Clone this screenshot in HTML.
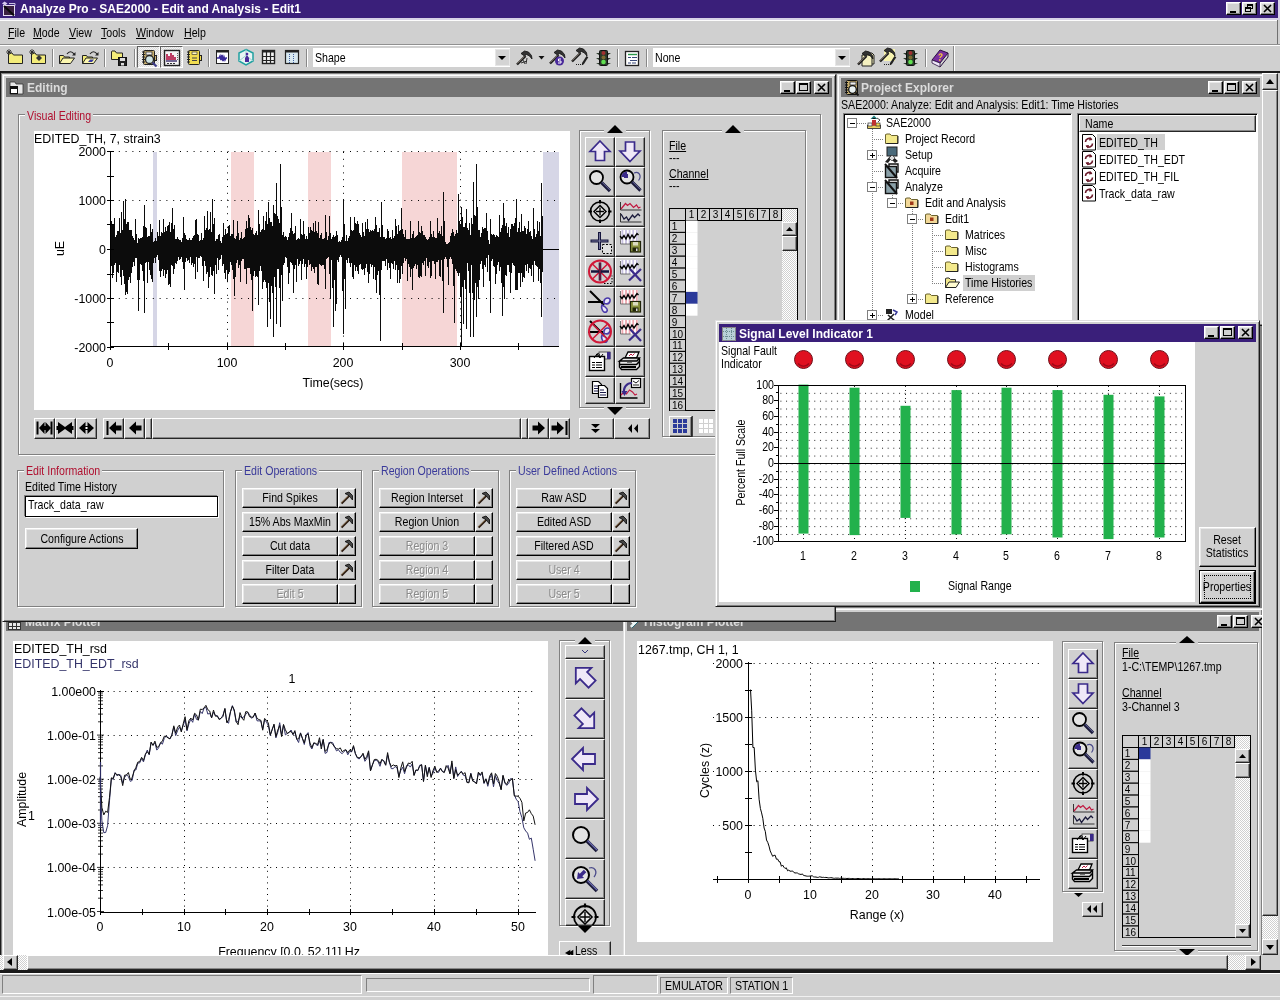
<!DOCTYPE html>
<html><head><meta charset="utf-8"><title>Analyze Pro - SAE2000 - Edit and Analysis - Edit1</title>
<style>
html,body{margin:0;padding:0}
html{width:1280px;height:1000px;overflow:hidden}
body{width:1280px;height:1000px;overflow:hidden;background:#d0d0d0;position:relative;will-change:transform;font-family:"Liberation Sans",sans-serif;font-size:11px}
body div,body svg{position:absolute;box-sizing:border-box;white-space:nowrap}
body svg{overflow:hidden}
.r{border:1px solid;border-color:#fff #262626 #262626 #fff;box-shadow:inset -1px -1px 0 #888}
.r2{border:1px solid;border-color:#fff #000 #000 #fff;box-shadow:inset -1px -1px 0 #808080,inset 1px 1px 0 #e8e8e8}
.s{border:1px solid;border-color:#808080 #fff #fff #808080}
.s2{border:1px solid;border-color:#808080 #fff #fff #808080;box-shadow:inset 1px 1px 0 #000}
.g{border:1px solid #808080;box-shadow:1px 1px 0 #fff,inset 1px 1px 0 #fff}
.u{text-decoration:underline}
.h2{background-color:#f4f4f4;background-image:linear-gradient(45deg,#dcdcdc 25%,transparent 25%,transparent 75%,#dcdcdc 75%),linear-gradient(45deg,#dcdcdc 25%,transparent 25%,transparent 75%,#dcdcdc 75%);background-size:2px 2px;background-position:0 0,1px 1px}
.h{background-color:#fff;background-image:linear-gradient(45deg,#d0d0d0 25%,transparent 25%,transparent 75%,#d0d0d0 75%),linear-gradient(45deg,#d0d0d0 25%,transparent 25%,transparent 75%,#d0d0d0 75%);background-size:2px 2px;background-position:0 0,1px 1px}
</style></head><body>
<div style="left:0px;top:0px;width:1280px;height:18px;background:#3a1f7a;"></div>
<svg style="left:1px;top:0px;" width="18" height="18" viewBox="1 0 18 18"><rect x="3.500" y="5.500" width="11" height="10" fill="#3a2040" stroke="#e4dcf0"/><path d="M4 6l10 9.500" stroke="#0a0a0a" stroke-width="2"/><path d="M2 3.500l2.500-2 3 2-2.500 2z" fill="#d8ccf0"/><path d="M9 3.500h6v2" stroke="#c8c0e0" fill="none"/></svg>
<div style="left:20px;top:2px;font-size:12px;line-height:14px;color:#fff;font-weight:bold;">Analyze Pro - SAE2000 - Edit and Analysis - Edit1</div>
<div class="r2" style="left:1226px;top:2px;width:15px;height:13px;background:#d0d0d0"></div>
<div style="left:1230px;top:11px;width:6px;height:2px;background:#000;"></div>
<div class="r2" style="left:1242px;top:2px;width:15px;height:13px;background:#d0d0d0"></div>
<div style="left:1247px;top:4px;width:6px;height:5px;border:1px solid #000;border-top-width:2px"></div>
<div style="left:1245px;top:7px;width:6px;height:5px;border:1px solid #000;border-top-width:2px;background:#d0d0d0"></div>
<div class="r2" style="left:1260px;top:2px;width:15px;height:13px;background:#d0d0d0"></div>
<svg style="left:1263px;top:4px;" width="9" height="9" viewBox="1263 4 9 9"><path d="M1264 5l7 7M1271 5l-7 7" stroke="#000" stroke-width="1.6" fill="none"/></svg>
<div style="left:1278px;top:0px;width:2px;height:18px;background:#d8d4e8;"></div>
<div style="left:0px;top:18px;width:1280px;height:27px;background:#d0d0d0;"></div>
<div style="left:0px;top:18px;width:1280px;height:2px;background:#d6d2e6;"></div>
<div style="left:0px;top:20px;width:1278px;height:1px;background:#fcfcfc;"></div>
<div style="left:1277px;top:20px;width:1px;height:25px;background:#707070;"></div>
<div style="left:8px;top:26px;font-size:12.2px;line-height:14px;transform:scaleX(0.87);transform-origin:0 50%;color:#000;"><span class="u">F</span>ile</div>
<div style="left:33px;top:26px;font-size:12.2px;line-height:14px;transform:scaleX(0.87);transform-origin:0 50%;color:#000;"><span class="u">M</span>ode</div>
<div style="left:69px;top:26px;font-size:12.2px;line-height:14px;transform:scaleX(0.87);transform-origin:0 50%;color:#000;"><span class="u">V</span>iew</div>
<div style="left:101px;top:26px;font-size:12.2px;line-height:14px;transform:scaleX(0.87);transform-origin:0 50%;color:#000;"><span class="u">T</span>ools</div>
<div style="left:136px;top:26px;font-size:12.2px;line-height:14px;transform:scaleX(0.87);transform-origin:0 50%;color:#000;"><span class="u">W</span>indow</div>
<div style="left:184px;top:26px;font-size:12.2px;line-height:14px;transform:scaleX(0.87);transform-origin:0 50%;color:#000;"><span class="u">H</span>elp</div>
<div style="left:0px;top:44px;width:1280px;height:1px;background:#909090;"></div>
<div style="left:0px;top:45px;width:1280px;height:1px;background:#fff;"></div>
<div style="left:0px;top:46px;width:1280px;height:25px;background:#d0d0d0;"></div>
<div style="left:52px;top:49px;width:1px;height:18px;background:#888;"></div>
<div style="left:53px;top:49px;width:1px;height:18px;background:#fff;"></div>
<div style="left:104px;top:49px;width:1px;height:18px;background:#888;"></div>
<div style="left:105px;top:49px;width:1px;height:18px;background:#fff;"></div>
<div style="left:134px;top:49px;width:1px;height:18px;background:#888;"></div>
<div style="left:135px;top:49px;width:1px;height:18px;background:#fff;"></div>
<div style="left:208px;top:49px;width:1px;height:18px;background:#888;"></div>
<div style="left:209px;top:49px;width:1px;height:18px;background:#fff;"></div>
<div style="left:306px;top:49px;width:1px;height:18px;background:#888;"></div>
<div style="left:307px;top:49px;width:1px;height:18px;background:#fff;"></div>
<div style="left:617px;top:49px;width:1px;height:18px;background:#888;"></div>
<div style="left:618px;top:49px;width:1px;height:18px;background:#fff;"></div>
<div style="left:646px;top:49px;width:1px;height:18px;background:#888;"></div>
<div style="left:647px;top:49px;width:1px;height:18px;background:#fff;"></div>
<div style="left:925px;top:49px;width:1px;height:18px;background:#888;"></div>
<div style="left:926px;top:49px;width:1px;height:18px;background:#fff;"></div>
<div style="left:313px;top:48px;width:197px;height:19px;background:#fff;"></div>
<div style="left:315px;top:51px;font-size:12.2px;line-height:14px;transform:scaleX(0.87);transform-origin:0 50%;color:#000;">Shape</div>
<div style="left:495px;top:49px;width:15px;height:17px;background:#d4d4d4;border:1px solid #e6e6e6"></div>
<svg style="left:495px;top:50px;" width="14" height="16" viewBox="495 50 14 16"><path d="M498 56h8l-4 4z" fill="#000"/></svg>
<div style="left:653px;top:48px;width:197px;height:19px;background:#fff;"></div>
<div style="left:655px;top:51px;font-size:12.2px;line-height:14px;transform:scaleX(0.87);transform-origin:0 50%;color:#000;">None</div>
<div style="left:835px;top:49px;width:15px;height:17px;background:#d4d4d4;border:1px solid #e6e6e6"></div>
<svg style="left:835px;top:50px;" width="14" height="16" viewBox="835 50 14 16"><path d="M838 56h8l-4 4z" fill="#000"/></svg>
<div style="left:0px;top:71px;width:1280px;height:2px;background:#1a1a1a;"></div>
<div style="left:0px;top:73px;width:1262px;height:897px;background:#808080;"></div>
<div style="left:0px;top:73px;width:1px;height:897px;background:#1a1a1a;"></div>
<div class="h2" style="left:137px;top:46px;width:23px;height:22px;border:1px solid;border-color:#606060 #fff #fff #606060"></div>
<div class="h2" style="left:160px;top:46px;width:23px;height:22px;border:1px solid;border-color:#606060 #fff #fff #606060"></div>
<svg style="left:0px;top:46px;" width="960" height="24" viewBox="0 46 960 24"><path d="M8.5 53.5v10h14v-8.5h-9l-1.500-2h-3z" fill="#f3ec7a" stroke="#222" stroke-width="1"/><path d="M9 49v6M6 52h6M7 50l4 4M11 50l-4 4" stroke="#222" stroke-width="0.8"/><path d="M31.5 53.5v10h14v-8.5h-9l-1.500-2h-3z" fill="#f3ec7a" stroke="#222" stroke-width="1"/><path d="M32 49v6M29 52h6M30 50l4 4M34 50l-4 4" stroke="#222" stroke-width="0.8"/><path d="M39 55l3 3-3 3-3-3z" fill="#333"/><path d="M59.5 63.5v-8h4l1 1.500h5v2" fill="#f3ec7a" stroke="#222"/><path d="M59.5 63.5l3.500-5.500h11.500l-4 5.500z" fill="#fbf7b0" stroke="#222"/><path d="M67 54c2-3 5-3 7 0" fill="none" stroke="#222" stroke-width="1.2"/><path d="M75.5 52v3.500h-3.500z" fill="#222"/><path d="M82.5 63.5v-8h4l1 1.500h5v2" fill="#f3ec7a" stroke="#222"/><path d="M82.5 63.5l3.500-5.500h11.500l-4 5.500z" fill="#fbf7b0" stroke="#222"/><path d="M90 54c2-3 5-3 7 0" fill="none" stroke="#222" stroke-width="1.2"/><path d="M98.5 52v3.500h-3.500z" fill="#222"/><path d="M88 62l2-2.500h4l-2 2.500z" fill="#3a3aa0"/><path d="M111.5 51.5v8h11v-6.5h-6l-1.500-2h-3z" fill="#f3ec7a" stroke="#222" stroke-width="1"/><rect x="118.500" y="57.500" width="8" height="8" fill="#222" stroke="#111"/><rect x="120" y="58" width="5" height="3" fill="#ddd"/><rect x="121" y="63" width="3" height="2.500" fill="#ddd"/><rect x="143.5" y="50.5" width="11" height="14" rx="1" fill="#c8b070" stroke="#222"/><path d="M142 52h3M142 54.5h3M142 57h3M142 59.5h3M142 62h3" stroke="#222" stroke-width="1"/><rect x="154.5" y="55.5" width="2" height="5" fill="#c8b070" stroke="#222"/><rect x="146" y="52" width="6" height="3" fill="#eee" stroke="#222" stroke-width="0.7"/><circle cx="149.500" cy="59.500" r="4" fill="#cfe4e4" stroke="#222" stroke-width="1.3"/><path d="M152.500 62.500l4 4" stroke="#3a3a8a" stroke-width="2"/><rect x="164.500" y="50.500" width="15" height="15" fill="#f4f4f4" stroke="#222" stroke-width="1.4"/><path d="M167 60v-6M169 60v-4M171 60v-7M173 60v-5M175 60v-3" stroke="#b01040" stroke-width="1.6"/><path d="M166 61h11" stroke="#3a2a6a" stroke-width="1.4"/><path d="M167 63.500h9" stroke="#333" stroke-dasharray="2 1"/><path d="M177.500 53v7" stroke="#666" stroke-dasharray="1 1"/><rect x="188.5" y="50.5" width="11" height="14" rx="1" fill="#f0dc50" stroke="#222"/><path d="M187 52h3M187 54.5h3M187 57h3M187 59.5h3M187 62h3" stroke="#222" stroke-width="1"/><rect x="199.5" y="55.5" width="2" height="5" fill="#f0dc50" stroke="#222"/><rect x="192" y="52" width="5" height="2.500" fill="#fff8c0" stroke="#222" stroke-width="0.6"/><path d="M192 58h5M192 60.500h5" stroke="#444"/><rect x="216.500" y="50.500" width="12" height="13" fill="#fff" stroke="#222"/><rect x="216" y="50" width="13" height="2.500" fill="#222"/><path d="M217 58h2l1-2 1 4 1-5 1 6 1-4 1 3 1-2h1" stroke="#3a2a9a" stroke-width="1.6" fill="none"/><path d="M246 49.500l7 3.500v8l-7 4-7-4v-8z" fill="#e8f4f4" stroke="#20a0a0" stroke-width="1.5"/><path d="M246 49.500v6l-7 5.500M246 55.500l7 5.500" stroke="#9ad0d0" fill="none"/><path d="M245 62v-4l2-3 2 3v4z" fill="#4a2a9a"/><circle cx="247" cy="54" r="1.300" fill="#4a2a9a"/><rect x="262.500" y="50.500" width="12" height="13" fill="#f4f4f4" stroke="#222" stroke-width="1.4"/><rect x="262" y="50" width="13" height="2.500" fill="#222"/><path d="M266.500 52v12M270.500 52v12M262 56.500h13M262 60.500h13" stroke="#222" stroke-width="1.2"/><rect x="285.500" y="50.500" width="13" height="13" fill="#d8e8f0" stroke="#222" stroke-width="1.2"/><rect x="285" y="50" width="14" height="2.500" fill="#222"/><path d="M289.500 54v9M293.500 54v9" stroke="#4060a0" stroke-dasharray="1 1"/><path d="M287 63.500h11" stroke="#222"/><path d="M517 64.5l8.500-8.500" stroke="#1a1a1a" stroke-width="2.4"/><path d="M517.2 63.6l7.500-7.500" stroke="#b0a090" stroke-width="0.7"/><path d="M521 53.5l3.500-2.500 4 1 3 3.500 0.500 3.500-2.500-3-3-1.500-2 1.500z" fill="#333" stroke="#111" stroke-width="0.8"/><path d="M523 60l2 4M527 58l-1 6M521 63l6-2" stroke="#222" stroke-width="0.9"/><path d="M538.500 56h6l-3 3.500z" fill="#111"/><path d="M550 63.5l8.500-8.500" stroke="#1a1a1a" stroke-width="2.4"/><path d="M550.2 62.6l7.500-7.500" stroke="#b0a090" stroke-width="0.7"/><path d="M554 52.5l3.500-2.500 4 1 3 3.500 0.500 3.500-2.500-3-3-1.500-2 1.500z" fill="#333" stroke="#111" stroke-width="0.8"/><circle cx="559.500" cy="61" r="4.500" fill="#4a2a9a"/><path d="M561 59h-2.500v2h2.500v2h-3" stroke="#fff" fill="none" stroke-width="1"/><path d="M572 61.5l8.500-8.500" stroke="#1a1a1a" stroke-width="2.4"/><path d="M572.2 60.6l7.500-7.500" stroke="#b0a090" stroke-width="0.7"/><path d="M576 50.5l3.500-2.500 4 1 3 3.500 0.500 3.500-2.500-3-3-1.500-2 1.500z" fill="#333" stroke="#111" stroke-width="0.8"/><path d="M576 64.500h7" stroke="#222" stroke-dasharray="1 1"/><path d="M582 63l4.500-7 1.800 1.200-4.500 7-2 1z" fill="#222"/><rect x="599.5" y="50.5" width="8" height="15" rx="1" fill="#2a3a2a" stroke="#111"/><path d="M596 53h3v2zM611 53h-3v2zM596 58h3v2zM611 58h-3v2zM596 63h3v1.500zM611 63h-3v1.500z" fill="#2a3a2a"/><circle cx="603.5" cy="53" r="2" fill="#a03030"/><circle cx="603.5" cy="57.5" r="2" fill="#7a6a30"/><circle cx="603.5" cy="62" r="2.300" fill="#60e050"/><rect x="625.500" y="51.500" width="13" height="14" fill="#fff" stroke="#222" stroke-width="1.3"/><path d="M628 54.500h9" stroke="#2a9a4a" stroke-width="1.4"/><path d="M628 57.500h3M632 57.500h5M630 60.500h7M628 63h3M632 63h4" stroke="#3a4a7a" stroke-width="1.1"/><path d="M864 53h8l2 2v9h-10z" fill="#f4f0c0" stroke="#222"/><path d="M862 55h8l2 2v9h-10z" fill="#f4f0c0" stroke="#222"/><path d="M858 64.5l8.500-8.500" stroke="#1a1a1a" stroke-width="2.4"/><path d="M858.2 63.6l7.500-7.500" stroke="#b0a090" stroke-width="0.7"/><path d="M862 53.5l3.500-2.500 4 1 3 3.500 0.500 3.500-2.500-3-3-1.500-2 1.500z" fill="#333" stroke="#111" stroke-width="0.8"/><rect x="884" y="49" width="11" height="12" fill="#f8f4b0"/><path d="M880 61.5l8.500-8.500" stroke="#1a1a1a" stroke-width="2.4"/><path d="M880.2 60.6l7.500-7.500" stroke="#b0a090" stroke-width="0.7"/><path d="M884 50.5l3.500-2.500 4 1 3 3.500 0.500 3.500-2.500-3-3-1.500-2 1.500z" fill="#333" stroke="#111" stroke-width="0.8"/><path d="M884 64.500h7" stroke="#222" stroke-dasharray="1 1"/><path d="M890 63l4.500-7 1.800 1.200-4.500 7-2 1z" fill="#222"/><rect x="906.5" y="50.5" width="8" height="15" rx="1" fill="#2a3a2a" stroke="#111"/><path d="M903 53h3v2zM918 53h-3v2zM903 58h3v2zM918 58h-3v2zM903 63h3v1.500zM918 63h-3v1.500z" fill="#2a3a2a"/><circle cx="910.5" cy="53" r="2" fill="#a03030"/><circle cx="910.5" cy="57.5" r="2" fill="#7a6a30"/><circle cx="910.5" cy="62" r="2.300" fill="#60e050"/><path d="M932 60l8-10 8 3-8 10z" fill="#7a30a0" stroke="#2a1040" stroke-width="1"/><path d="M932 60v3l8 4v-4z" fill="#f0e8f8" stroke="#2a1040" stroke-width="0.8"/><path d="M940 67l8-10v-4" fill="none" stroke="#2a1040"/><path d="M939 55.500c0-2 3-2 3-0.500s-2 1.500-2 3" stroke="#f0c040" fill="none" stroke-width="1.3"/><circle cx="939.800" cy="60" r="0.900" fill="#f0c040"/></svg>
<div style="left:953px;top:46px;width:1px;height:25px;background:#888;"></div>
<div style="left:954px;top:46px;width:1px;height:25px;background:#fff;"></div>
<div style="left:2px;top:608px;width:640px;height:360px;background:#d0d0d0;border:1px solid;border-color:#e0e0e0 #1a1a1a #1a1a1a #e0e0e0;box-shadow:inset 1px 1px 0 #fff,inset -1px -1px 0 #808080"></div>
<div style="left:6px;top:612px;width:632px;height:19px;background:#747474;"></div>
<div style="left:25px;top:615px;font-size:12px;line-height:14px;color:#dcdcdc;font-weight:bold;">Matrix Plotter</div>
<svg style="left:7px;top:613px;" width="16" height="17" viewBox="7 613 16 17"><rect x="8.500" y="622.500" width="12" height="7" fill="#e8e8e8" stroke="#333"/><path d="M12.500 623v7M16.500 623v7M9 626.500h11" stroke="#333"/></svg>
<div style="left:13px;top:641px;width:535px;height:320px;background:#fff;"></div>
<div style="left:14px;top:642px;font-size:12.4px;line-height:14.4px;color:#000;">EDITED_TH_rsd</div>
<div style="left:14px;top:657px;font-size:12.4px;line-height:14.4px;color:#34346a;">EDITED_TH_EDT_rsd</div>
<div style="left:283px;width:18px;text-align:center;top:672px;font-size:12.4px;line-height:14.4px;color:#000;">1</div>
<svg style="left:13px;top:641px;" width="535" height="314" viewBox="13 641 535 314"><path d="M102 691.5H536" stroke="#000" stroke-width="1" stroke-dasharray="1 4.8"/><path d="M102 735.5H536" stroke="#000" stroke-width="1" stroke-dasharray="1 4.8"/><path d="M102 779.5H536" stroke="#000" stroke-width="1" stroke-dasharray="1 4.8"/><path d="M102 823.5H536" stroke="#000" stroke-width="1" stroke-dasharray="1 4.8"/><path d="M102 867.5H536" stroke="#000" stroke-width="1" stroke-dasharray="1 4.8"/><path d="M184.5 691V911.5" stroke="#000" stroke-width="1" stroke-dasharray="1 4.8"/><path d="M267.5 691V911.5" stroke="#000" stroke-width="1" stroke-dasharray="1 4.8"/><path d="M350.5 691V911.5" stroke="#000" stroke-width="1" stroke-dasharray="1 4.8"/><path d="M434.5 691V911.5" stroke="#000" stroke-width="1" stroke-dasharray="1 4.8"/><path d="M518.5 691V911.5" stroke="#000" stroke-width="1" stroke-dasharray="1 4.8"/><path d="M100.5 690V912.5H536" stroke="#000" fill="none"/><path d="M100.5 909V915" stroke="#000"/><path d="M142.5 909V915" stroke="#000"/><path d="M184.5 909V915" stroke="#000"/><path d="M225.5 909V915" stroke="#000"/><path d="M267.5 909V915" stroke="#000"/><path d="M309.5 909V915" stroke="#000"/><path d="M350.5 909V915" stroke="#000"/><path d="M392.5 909V915" stroke="#000"/><path d="M434.5 909V915" stroke="#000"/><path d="M476.5 909V915" stroke="#000"/><path d="M518.5 909V915" stroke="#000"/><path d="M97 735.1H104" stroke="#000" stroke-width="0.8"/><path d="M98 721.8H103" stroke="#000" stroke-width="0.8"/><path d="M98 714.1H103" stroke="#000" stroke-width="0.8"/><path d="M98 708.5H103" stroke="#000" stroke-width="0.8"/><path d="M98 704.3H103" stroke="#000" stroke-width="0.8"/><path d="M98 700.8H103" stroke="#000" stroke-width="0.8"/><path d="M98 697.8H103" stroke="#000" stroke-width="0.8"/><path d="M98 695.3H103" stroke="#000" stroke-width="0.8"/><path d="M98 693.0H103" stroke="#000" stroke-width="0.8"/><path d="M97 779.2H104" stroke="#000" stroke-width="0.8"/><path d="M98 765.9H103" stroke="#000" stroke-width="0.8"/><path d="M98 758.2H103" stroke="#000" stroke-width="0.8"/><path d="M98 752.6H103" stroke="#000" stroke-width="0.8"/><path d="M98 748.4H103" stroke="#000" stroke-width="0.8"/><path d="M98 744.9H103" stroke="#000" stroke-width="0.8"/><path d="M98 741.9H103" stroke="#000" stroke-width="0.8"/><path d="M98 739.4H103" stroke="#000" stroke-width="0.8"/><path d="M98 737.1H103" stroke="#000" stroke-width="0.8"/><path d="M97 823.3H104" stroke="#000" stroke-width="0.8"/><path d="M98 810.0H103" stroke="#000" stroke-width="0.8"/><path d="M98 802.3H103" stroke="#000" stroke-width="0.8"/><path d="M98 796.7H103" stroke="#000" stroke-width="0.8"/><path d="M98 792.5H103" stroke="#000" stroke-width="0.8"/><path d="M98 789.0H103" stroke="#000" stroke-width="0.8"/><path d="M98 786.0H103" stroke="#000" stroke-width="0.8"/><path d="M98 783.5H103" stroke="#000" stroke-width="0.8"/><path d="M98 781.2H103" stroke="#000" stroke-width="0.8"/><path d="M97 867.4H104" stroke="#000" stroke-width="0.8"/><path d="M98 854.1H103" stroke="#000" stroke-width="0.8"/><path d="M98 846.4H103" stroke="#000" stroke-width="0.8"/><path d="M98 840.8H103" stroke="#000" stroke-width="0.8"/><path d="M98 836.6H103" stroke="#000" stroke-width="0.8"/><path d="M98 833.1H103" stroke="#000" stroke-width="0.8"/><path d="M98 830.1H103" stroke="#000" stroke-width="0.8"/><path d="M98 827.6H103" stroke="#000" stroke-width="0.8"/><path d="M98 825.3H103" stroke="#000" stroke-width="0.8"/><path d="M97 911.5H104" stroke="#000" stroke-width="0.8"/><path d="M98 898.2H103" stroke="#000" stroke-width="0.8"/><path d="M98 890.5H103" stroke="#000" stroke-width="0.8"/><path d="M98 884.9H103" stroke="#000" stroke-width="0.8"/><path d="M98 880.7H103" stroke="#000" stroke-width="0.8"/><path d="M98 877.2H103" stroke="#000" stroke-width="0.8"/><path d="M98 874.2H103" stroke="#000" stroke-width="0.8"/><path d="M98 871.7H103" stroke="#000" stroke-width="0.8"/><path d="M98 869.4H103" stroke="#000" stroke-width="0.8"/><path d="M97 691.5H104" stroke="#000"/><path d="M100.0 778.2 L101.9 820.8 L103.8 832.7 L105.7 832.5 L107.6 825.7 L109.5 800.8 L111.4 778.0 L113.2 779.4 L115.1 772.5 L117.0 775.8 L118.9 774.3 L120.8 775.3 L122.7 783.2 L124.6 777.5 L126.5 774.8 L128.4 776.5 L130.3 781.4 L132.2 780.4 L134.1 770.0 L135.9 770.0 L137.8 763.1 L139.7 762.9 L141.6 758.5 L143.5 761.9 L145.4 754.8 L147.3 750.0 L149.2 754.8 L151.1 742.8 L153.0 745.1 L154.9 742.8 L156.8 750.1 L158.6 747.9 L160.5 742.4 L162.4 744.2 L164.3 738.3 L166.2 735.9 L168.1 737.5 L170.0 739.1 L171.9 734.5 L173.8 727.0 L175.7 735.6 L177.6 730.6 L179.5 727.0 L181.3 730.8 L183.2 725.6 L185.1 719.6 L187.0 730.9 L188.9 723.8 L190.8 719.2 L192.7 722.3 L194.6 713.8 L196.5 719.4 L198.4 719.9 L200.3 711.4 L202.2 713.6 L204.1 708.0 L205.9 707.2 L207.8 714.1 L209.7 713.3 L211.6 717.8 L213.5 712.0 L215.4 715.6 L217.3 715.6 L219.2 718.9 L221.1 718.3 L223.0 715.0 L224.9 708.8 L226.8 722.0 L228.6 723.2 L230.5 711.5 L232.4 705.6 L234.3 711.5 L236.2 722.2 L238.1 721.5 L240.0 716.3 L241.9 717.8 L243.8 716.9 L245.7 714.4 L247.6 712.1 L249.5 714.6 L251.3 718.2 L253.2 717.3 L255.1 713.2 L257.0 720.8 L258.9 720.9 L260.8 720.9 L262.7 729.2 L264.6 719.9 L266.5 722.1 L268.4 725.8 L270.3 735.5 L272.2 729.0 L274.0 725.1 L275.9 737.9 L277.8 732.2 L279.7 722.7 L281.6 735.1 L283.5 725.0 L285.4 734.9 L287.3 733.4 L289.2 732.4 L291.1 730.0 L293.0 734.7 L294.9 732.1 L296.7 739.0 L298.6 742.5 L300.5 732.8 L302.4 738.6 L304.3 744.5 L306.2 734.8 L308.1 732.6 L310.0 745.8 L311.9 749.0 L313.8 743.1 L315.7 743.9 L317.6 746.0 L319.5 740.7 L321.3 746.2 L323.2 739.4 L325.1 753.4 L327.0 752.4 L328.9 742.6 L330.8 742.3 L332.7 742.7 L334.6 746.9 L336.5 750.9 L338.4 749.7 L340.3 752.3 L342.2 753.7 L344.0 751.5 L345.9 750.0 L347.8 754.8 L349.7 751.4 L351.6 751.9 L353.5 746.8 L355.4 753.7 L357.3 757.9 L359.2 759.0 L361.1 756.4 L363.0 754.4 L364.9 761.3 L366.7 758.7 L368.6 752.5 L370.5 770.7 L372.4 765.1 L374.3 760.5 L376.2 760.1 L378.1 761.6 L380.0 766.3 L381.9 759.8 L383.8 760.7 L385.7 765.2 L387.6 754.8 L389.4 762.5 L391.3 768.6 L393.2 768.7 L395.1 766.5 L397.0 767.8 L398.9 776.2 L400.8 770.4 L402.7 767.2 L404.6 773.7 L406.5 765.6 L408.4 764.9 L410.3 767.1 L412.2 764.0 L414.0 775.0 L415.9 770.0 L417.8 770.7 L419.7 765.2 L421.6 764.8 L423.5 781.3 L425.4 765.7 L427.3 774.4 L429.2 767.3 L431.1 776.2 L433.0 773.1 L434.9 767.9 L436.7 772.0 L438.6 772.4 L440.5 768.0 L442.4 771.5 L444.3 772.1 L446.2 767.5 L448.1 765.3 L450.0 772.8 L451.9 763.3 L453.8 778.6 L455.7 766.9 L457.6 776.5 L459.4 773.4 L461.3 771.3 L463.2 775.1 L465.1 775.6 L467.0 782.4 L468.9 782.4 L470.8 773.2 L472.7 780.3 L474.6 782.1 L476.5 782.9 L478.4 772.8 L480.3 775.7 L482.1 773.3 L484.0 783.6 L485.9 778.8 L487.8 786.3 L489.7 778.3 L491.6 774.4 L493.5 786.8 L495.4 775.7 L497.3 780.7 L499.2 783.6 L501.1 789.1 L503.0 775.9 L504.8 783.0 L506.7 785.4 L508.6 783.5 L510.5 778.6 L512.4 779.1 L514.3 794.7 L516.2 799.2 L518.1 801.6 L520.0 811.7 L521.9 817.7 L523.8 827.8 L525.7 831.0 L527.6 833.1 L529.4 839.3 L531.3 838.1 L533.2 849.2 L535.1 860.8" stroke="#34346a" fill="none" stroke-width="1"/><path d="M100.0 776.8 L101.9 807.6 L103.8 814.9 L105.7 811.2 L107.6 812.4 L109.5 797.3 L111.4 777.9 L113.2 778.4 L115.1 773.2 L117.0 774.7 L118.9 774.9 L120.8 776.6 L122.7 785.6 L124.6 775.2 L126.5 775.0 L128.4 772.5 L130.3 779.6 L132.2 777.3 L134.1 771.2 L135.9 767.4 L137.8 762.1 L139.7 761.7 L141.6 757.3 L143.5 760.4 L145.4 754.1 L147.3 751.7 L149.2 754.3 L151.1 742.0 L153.0 745.5 L154.9 741.1 L156.8 747.5 L158.6 746.5 L160.5 743.3 L162.4 740.8 L164.3 736.2 L166.2 736.5 L168.1 738.0 L170.0 738.6 L171.9 735.1 L173.8 725.8 L175.7 733.2 L177.6 727.2 L179.5 725.0 L181.3 732.0 L183.2 723.8 L185.1 716.7 L187.0 729.8 L188.9 720.7 L190.8 718.1 L192.7 720.0 L194.6 713.3 L196.5 714.9 L198.4 720.2 L200.3 709.2 L202.2 709.5 L204.1 707.9 L205.9 705.3 L207.8 709.7 L209.7 711.0 L211.6 717.9 L213.5 710.1 L215.4 716.2 L217.3 716.1 L219.2 719.6 L221.1 718.3 L223.0 716.4 L224.9 708.4 L226.8 722.7 L228.6 719.7 L230.5 711.8 L232.4 706.1 L234.3 709.9 L236.2 721.4 L238.1 724.7 L240.0 712.6 L241.9 717.9 L243.8 720.3 L245.7 711.7 L247.6 711.8 L249.5 716.6 L251.3 717.0 L253.2 717.1 L255.1 713.0 L257.0 718.3 L258.9 719.6 L260.8 720.2 L262.7 730.2 L264.6 718.4 L266.5 720.5 L268.4 723.1 L270.3 734.9 L272.2 729.8 L274.0 724.0 L275.9 736.5 L277.8 730.1 L279.7 725.5 L281.6 736.6 L283.5 724.4 L285.4 729.8 L287.3 733.6 L289.2 732.1 L291.1 731.4 L293.0 734.4 L294.9 730.6 L296.7 739.2 L298.6 738.8 L300.5 733.1 L302.4 738.2 L304.3 742.9 L306.2 735.5 L308.1 733.9 L310.0 743.0 L311.9 747.7 L313.8 742.8 L315.7 743.4 L317.6 744.7 L319.5 737.7 L321.3 749.0 L323.2 739.5 L325.1 751.3 L327.0 749.7 L328.9 744.1 L330.8 742.5 L332.7 744.2 L334.6 747.1 L336.5 748.6 L338.4 749.1 L340.3 747.9 L342.2 751.8 L344.0 750.4 L345.9 749.7 L347.8 752.8 L349.7 750.0 L351.6 751.5 L353.5 745.6 L355.4 753.6 L357.3 757.5 L359.2 757.8 L361.1 756.8 L363.0 753.2 L364.9 759.3 L366.7 756.6 L368.6 750.8 L370.5 770.8 L372.4 764.9 L374.3 759.5 L376.2 759.3 L378.1 760.4 L380.0 763.7 L381.9 759.3 L383.8 761.3 L385.7 765.2 L387.6 752.6 L389.4 762.1 L391.3 766.5 L393.2 764.9 L395.1 765.8 L397.0 765.5 L398.9 777.6 L400.8 768.1 L402.7 761.8 L404.6 771.7 L406.5 767.2 L408.4 763.0 L410.3 763.7 L412.2 761.3 L414.0 775.6 L415.9 770.0 L417.8 770.3 L419.7 766.3 L421.6 764.6 L423.5 781.5 L425.4 765.2 L427.3 776.7 L429.2 767.6 L431.1 777.5 L433.0 770.5 L434.9 766.2 L436.7 772.3 L438.6 771.0 L440.5 768.4 L442.4 771.5 L444.3 772.6 L446.2 765.6 L448.1 767.9 L450.0 774.0 L451.9 760.9 L453.8 778.4 L455.7 769.6 L457.6 775.2 L459.4 773.8 L461.3 771.6 L463.2 774.1 L465.1 772.6 L467.0 782.5 L468.9 782.8 L470.8 773.7 L472.7 781.1 L474.6 781.7 L476.5 784.0 L478.4 772.2 L480.3 774.8 L482.1 771.9 L484.0 782.8 L485.9 778.9 L487.8 784.3 L489.7 776.1 L491.6 772.8 L493.5 784.0 L495.4 773.5 L497.3 776.3 L499.2 781.8 L501.1 789.9 L503.0 775.2 L504.8 782.1 L506.7 784.5 L508.6 780.2 L510.5 780.4 L512.4 778.3 L514.3 796.0 L516.2 796.1 L518.1 796.2 L520.0 798.4 L521.9 802.3 L523.8 820.9 L525.7 813.0 L527.6 812.4 L529.4 809.8 L531.3 813.6 L533.2 816.1 L535.1 824.8" stroke="#111" fill="none" stroke-width="1"/><path d="M100.5 762V828" stroke="#2a2a60" stroke-width="1.2"/></svg>
<div style="left:-104px;width:200px;text-align:right;top:685px;font-size:12.4px;line-height:14.4px;color:#000;">1.00e00</div>
<div style="left:-104px;width:200px;text-align:right;top:729px;font-size:12.4px;line-height:14.4px;color:#000;">1.00e-01</div>
<div style="left:-104px;width:200px;text-align:right;top:773px;font-size:12.4px;line-height:14.4px;color:#000;">1.00e-02</div>
<div style="left:-104px;width:200px;text-align:right;top:817px;font-size:12.4px;line-height:14.4px;color:#000;">1.00e-03</div>
<div style="left:-104px;width:200px;text-align:right;top:861px;font-size:12.4px;line-height:14.4px;color:#000;">1.00e-04</div>
<div style="left:-104px;width:200px;text-align:right;top:906px;font-size:12.4px;line-height:14.4px;color:#000;">1.00e-05</div>
<div style="left:91px;width:18px;text-align:center;top:920px;font-size:12.4px;line-height:14.4px;color:#000;">0</div>
<div style="left:171px;width:26px;text-align:center;top:920px;font-size:12.4px;line-height:14.4px;color:#000;">10</div>
<div style="left:254px;width:26px;text-align:center;top:920px;font-size:12.4px;line-height:14.4px;color:#000;">20</div>
<div style="left:337px;width:26px;text-align:center;top:920px;font-size:12.4px;line-height:14.4px;color:#000;">30</div>
<div style="left:421px;width:26px;text-align:center;top:920px;font-size:12.4px;line-height:14.4px;color:#000;">40</div>
<div style="left:505px;width:26px;text-align:center;top:920px;font-size:12.4px;line-height:14.4px;color:#000;">50</div>
<div style="left:212px;width:154px;text-align:center;top:945px;font-size:12.4px;line-height:14.4px;color:#000;">Frequency [0.0, 52.11] Hz</div>
<div style="left:-28px;top:792px;width:100px;text-align:center;font-size:12.4px;line-height:15px;transform:rotate(-90deg)">Amplitude</div>
<div style="left:28px;top:809px;font-size:12.4px;line-height:14.4px;color:#000;">1</div>
<div class="g" style="left:559px;top:640px;width:51px;height:286px"></div>
<div style="left:575px;top:638px;width:20px;height:6px;background:#d0d0d0;"></div>
<svg style="left:575px;top:634px;" width="20" height="12" viewBox="575 634 20 12"><path d="M578 644h14l-7-7z" fill="#000"/></svg>
<div class="r" style="left:565px;top:645px;width:40px;height:14px;background:#d0d0d0"></div>
<svg style="left:580px;top:648px;" width="12" height="8" viewBox="580 648 12 8"><path d="M582 650l3 3 3-3" stroke="#34347a" fill="none"/></svg>
<div class="r" style="left:565px;top:659px;width:40px;height:40px;background:#d0d0d0"></div>
<div class="r" style="left:565px;top:699px;width:40px;height:40px;background:#d0d0d0"></div>
<div class="r" style="left:565px;top:739px;width:40px;height:40px;background:#d0d0d0"></div>
<div class="r" style="left:565px;top:779px;width:40px;height:40px;background:#d0d0d0"></div>
<div class="r" style="left:565px;top:819px;width:40px;height:40px;background:#d0d0d0"></div>
<div class="r" style="left:565px;top:859px;width:40px;height:40px;background:#d0d0d0"></div>
<div class="r" style="left:565px;top:899px;width:40px;height:27px;background:#d0d0d0"></div>
<svg style="left:565px;top:659px;" width="40" height="266" viewBox="565 659 40 266"><path transform="rotate(-45 585 677)" d="M585 664l11 11h-6v12h-10v-12h-6z" fill="#efe8f8" stroke="#3a2a8a" stroke-width="1.8"/><path transform="rotate(135 585 719)" d="M585 706l11 11h-6v12h-10v-12h-6z" fill="#efe8f8" stroke="#3a2a8a" stroke-width="1.8"/><path transform="rotate(-90 585 759)" d="M585 746l11 11h-6v12h-10v-12h-6z" fill="#efe8f8" stroke="#3a2a8a" stroke-width="1.8"/><path transform="rotate(90 585 799)" d="M585 786l11 11h-6v12h-10v-12h-6z" fill="#efe8f8" stroke="#3a2a8a" stroke-width="1.8"/><circle cx="581" cy="835" r="8" fill="#e4e4e4" stroke="#000" stroke-width="2"/><path d="M587 841l10 10" stroke="#1a1a3a" stroke-width="3.6"/><path d="M587.5 840.5l9.500 9.500" stroke="#6a6ab0" stroke-width="1.2"/><circle cx="581" cy="875" r="8" fill="#e4e4e4" stroke="#000" stroke-width="2"/><path d="M587 881l10 10" stroke="#1a1a3a" stroke-width="3.6"/><path d="M587.5 880.5l9.500 9.500" stroke="#6a6ab0" stroke-width="1.2"/><path d="M577 879l1-7 1.800 1.800 4-4 2.500 2.500-4 4 1.800 1.800z" fill="#3a2a8a"/><path d="M589 868c6-2 9 4 5 9" fill="none" stroke="#4a4a8a" stroke-width="1.3"/><circle cx="585" cy="917" r="11" fill="none" stroke="#000" stroke-width="1.8"/><path d="M585 910l7 7-7 7-7-7z" fill="#e8e8e8" stroke="#000" stroke-width="1.6"/><path d="M585 912v10M580 917h10" stroke="#000" stroke-width="1.4"/><path d="M585 903.5v4M585 926.5v4M571.5 917h4M594.5 917h4" stroke="#000" stroke-width="2.2"/></svg>
<svg style="left:575px;top:926px;" width="20" height="8" viewBox="575 926 20 8"><path d="M578 926h14l-7 7z" fill="#000"/></svg>
<div class="r" style="left:559px;top:941px;width:52px;height:20px;background:#d0d0d0"></div>
<div style="left:565px;top:944px;font-size:12.2px;line-height:14px;transform:scaleX(0.87);transform-origin:0 50%;color:#000;"><span style="font-size:8px;letter-spacing:-2px">&#9664;&#9664;</span>&nbsp;Less</div>
<div style="left:623px;top:608px;width:640px;height:360px;background:#d0d0d0;border:1px solid;border-color:#e0e0e0 #1a1a1a #1a1a1a #e0e0e0;box-shadow:inset 1px 1px 0 #fff,inset -1px -1px 0 #808080"></div>
<div style="left:627px;top:612px;width:632px;height:19px;background:#747474;"></div>
<div style="left:644px;top:615px;font-size:12px;line-height:14px;color:#dcdcdc;font-weight:bold;">Histogram Plotter</div>
<div class="r2" style="left:1217px;top:615px;width:15px;height:13px;background:#d0d0d0"></div>
<div style="left:1221px;top:624px;width:6px;height:2px;background:#000;"></div>
<div class="r2" style="left:1233px;top:615px;width:15px;height:13px;background:#d0d0d0"></div>
<div style="left:1236px;top:617px;width:9px;height:8px;border:1px solid #000;border-top-width:2px"></div>
<div class="r2" style="left:1251px;top:615px;width:15px;height:13px;background:#d0d0d0"></div>
<svg style="left:1254px;top:617px;" width="9" height="9" viewBox="1254 617 9 9"><path d="M1255 618l7 7M1262 618l-7 7" stroke="#000" stroke-width="1.6" fill="none"/></svg>
<svg style="left:629px;top:613px;" width="14" height="17" viewBox="629 613 14 17"><path d="M631 627l8-8" stroke="#e8f4f4" stroke-width="3"/><path d="M632 628l8-8" stroke="#2a6a7a" stroke-width="1"/><path d="M631 621l3 3" stroke="#fff" stroke-width="1.5"/></svg>
<div style="left:637px;top:641px;width:416px;height:301px;background:#fff;"></div>
<div style="left:638px;top:643px;font-size:12.4px;line-height:14.4px;color:#000;">1267.tmp, CH 1, 1</div>
<svg style="left:637px;top:641px;" width="416" height="301" viewBox="637 641 416 301"><path d="M713 825.5H1040" stroke="#000" stroke-width="1" stroke-dasharray="1 4.8"/><path d="M713 771.5H1040" stroke="#000" stroke-width="1" stroke-dasharray="1 4.8"/><path d="M713 717.5H1040" stroke="#000" stroke-width="1" stroke-dasharray="1 4.8"/><path d="M713 663.5H1040" stroke="#000" stroke-width="1" stroke-dasharray="1 4.8"/><path d="M810.5 662V879" stroke="#000" stroke-width="1" stroke-dasharray="1 4.8"/><path d="M872.5 662V879" stroke="#000" stroke-width="1" stroke-dasharray="1 4.8"/><path d="M933.5 662V879" stroke="#000" stroke-width="1" stroke-dasharray="1 4.8"/><path d="M995.5 662V879" stroke="#000" stroke-width="1" stroke-dasharray="1 4.8"/><path d="M748.5 662V883" stroke="#000"/><path d="M713 879.5H1040" stroke="#000"/><path d="M745 852.5H752" stroke="#000"/><path d="M745 825.5H752" stroke="#000"/><path d="M745 798.5H752" stroke="#000"/><path d="M745 771.5H752" stroke="#000"/><path d="M745 744.5H752" stroke="#000"/><path d="M745 717.5H752" stroke="#000"/><path d="M745 690.5H752" stroke="#000"/><path d="M745 663.5H752" stroke="#000"/><path d="M717.5 876V883" stroke="#000"/><path d="M748.5 876V883" stroke="#000"/><path d="M779.5 876V883" stroke="#000"/><path d="M810.5 876V883" stroke="#000"/><path d="M841.5 876V883" stroke="#000"/><path d="M872.5 876V883" stroke="#000"/><path d="M902.5 876V883" stroke="#000"/><path d="M933.5 876V883" stroke="#000"/><path d="M964.5 876V883" stroke="#000"/><path d="M995.5 876V883" stroke="#000"/><path d="M1026.5 876V883" stroke="#000"/><path d="M750.5 689.6 L751.7 710.8 L752.9 747.5 L754.2 747.5 L755.4 770.1 L756.7 781.8 L757.9 780.7 L759.1 799.3 L760.4 808.5 L761.6 812.9 L762.8 818.3 L764.1 828.0 L765.3 831.4 L766.5 840.0 L767.8 842.5 L769.0 846.1 L770.2 850.9 L771.5 853.8 L772.7 856.4 L774.0 855.3 L775.2 855.3 L776.4 859.2 L777.7 859.1 L778.9 861.6 L780.1 861.9 L781.4 866.3 L782.6 865.0 L783.8 867.1 L785.1 868.5 L786.3 867.8 L787.6 870.8 L788.8 870.1 L790.0 871.2 L791.3 871.2 L792.5 870.9 L793.7 872.3 L795.0 873.0 L796.2 872.9 L797.4 873.0 L798.7 873.9 L799.9 874.2 L801.1 874.5 L802.4 873.9 L803.6 875.5 L804.9 875.7 L806.1 876.0 L807.3 876.2 L808.6 876.2 L809.8 876.1 L811.0 875.9 L812.3 875.8 L813.5 876.8 L814.7 877.0 L816.0 877.0 L817.2 877.4 L818.5 877.3 L819.7 876.8 L820.9 877.1 L822.2 877.4 L823.4 877.3 L824.6 877.5 L825.9 877.4 L827.1 877.6 L828.3 877.9 L829.6 877.8 L830.8 877.7 L832.0 877.8 L833.3 878.2 L834.5 878.3 L835.8 878.1 L837.0 878.2 L838.2 878.1 L839.5 878.4 L840.7 878.2 L841.9 878.3 L843.2 878.3 L844.4 878.4 L845.6 878.4 L846.9 878.5 L848.1 878.4 L849.4 878.4 L850.6 878.5 L851.8 878.6 L853.1 878.6 L854.3 878.7 L855.5 878.6 L856.8 878.6 L858.0 878.5 L859.2 878.6 L860.5 878.6 L861.7 878.8 L862.9 878.7 L864.2 878.6 L865.4 878.7 L866.7 878.7 L867.9 878.7 L869.1 878.8 L870.4 878.7 L871.6 878.8 L872.8 878.8 L874.1 878.8 L875.3 878.8 L876.5 878.7 L877.8 878.8 L879.0 878.8 L880.3 878.8 L881.5 878.8 L882.7 878.8 L884.0 878.8 L885.2 878.8 L886.4 878.8 L887.7 878.8 L888.9 878.8 L890.1 878.8 L891.4 878.8 L892.6 878.8 L893.8 878.8 L895.1 878.8 L896.3 878.8 L897.6 878.8 L898.8 878.8" stroke="#000" fill="none"/></svg>
<div style="left:543px;width:200px;text-align:right;top:819px;font-size:12.4px;line-height:14.4px;color:#000;background:#fff;width:auto;left:auto;right:536px;padding:0 1px">500</div>
<div style="left:543px;width:200px;text-align:right;top:765px;font-size:12.4px;line-height:14.4px;color:#000;background:#fff;width:auto;left:auto;right:536px;padding:0 1px">1000</div>
<div style="left:543px;width:200px;text-align:right;top:711px;font-size:12.4px;line-height:14.4px;color:#000;background:#fff;width:auto;left:auto;right:536px;padding:0 1px">1500</div>
<div style="left:543px;width:200px;text-align:right;top:657px;font-size:12.4px;line-height:14.4px;color:#000;background:#fff;width:auto;left:auto;right:536px;padding:0 1px">2000</div>
<div style="left:739px;width:18px;text-align:center;top:888px;font-size:12.4px;line-height:14.4px;color:#000;">0</div>
<div style="left:797px;width:26px;text-align:center;top:888px;font-size:12.4px;line-height:14.4px;color:#000;">10</div>
<div style="left:859px;width:26px;text-align:center;top:888px;font-size:12.4px;line-height:14.4px;color:#000;">20</div>
<div style="left:920px;width:26px;text-align:center;top:888px;font-size:12.4px;line-height:14.4px;color:#000;">30</div>
<div style="left:982px;width:26px;text-align:center;top:888px;font-size:12.4px;line-height:14.4px;color:#000;">40</div>
<div style="left:844px;width:66px;text-align:center;top:908px;font-size:12.4px;line-height:14.4px;color:#000;">Range (x)</div>
<div style="left:655px;top:763px;width:100px;text-align:center;font-size:12.4px;line-height:15px;transform:rotate(-90deg)">Cycles (z)</div>
<div class="g" style="left:1062px;top:641px;width:41px;height:251px"></div>
<div class="r" style="left:1068px;top:649px;width:30px;height:30px;background:#d0d0d0"></div>
<div class="r" style="left:1068px;top:679px;width:30px;height:30px;background:#d0d0d0"></div>
<div class="r" style="left:1068px;top:709px;width:30px;height:30px;background:#d0d0d0"></div>
<div class="r" style="left:1068px;top:739px;width:30px;height:30px;background:#d0d0d0"></div>
<div class="r" style="left:1068px;top:769px;width:30px;height:30px;background:#d0d0d0"></div>
<div class="r" style="left:1068px;top:799px;width:30px;height:30px;background:#d0d0d0"></div>
<div class="r" style="left:1068px;top:829px;width:30px;height:30px;background:#d0d0d0"></div>
<div class="r" style="left:1068px;top:859px;width:30px;height:30px;background:#d0d0d0"></div>
<svg style="left:1068px;top:649px;" width="30" height="240" viewBox="1068 649 30 240"><path d="M1083 653l10 10.500h-5.500v9h-9v-9h-5.500z" fill="#efe8f8" stroke="#3a2a8a" stroke-width="1.7" stroke-linejoin="miter"/><path d="M1083 703.5l10-10.500h-5.500v-9h-9v9h-5.500z" fill="#efe8f8" stroke="#3a2a8a" stroke-width="1.7"/><circle cx="1079.5" cy="719.5" r="6.500" fill="#e4e4e4" stroke="#000" stroke-width="1.8"/><path d="M1084.5 724.5l8.500 8.500" stroke="#1a1a3a" stroke-width="3.2"/><path d="M1085 724.2l8 8" stroke="#6a6aa0" stroke-width="1"/><circle cx="1080" cy="749" r="6.500" fill="#e4e4e4" stroke="#000" stroke-width="1.8"/><path d="M1080 749v-5.500a5.500 5.500 0 0 0 -5.500 5.500z" fill="#3a2a8a"/><path d="M1077 746h4v4h-4z" fill="#3a2a8a"/><path d="M1087 745c5-2.500 8 3 4.500 7.500" fill="none" stroke="#4a4a8a" stroke-width="1.2"/><path d="M1085 754l8.500 8.500" stroke="#1a1a3a" stroke-width="3.2"/><path d="M1085.5 753.7l8 8" stroke="#6a6aa0" stroke-width="1"/><circle cx="1083" cy="783.5" r="9.500" fill="none" stroke="#000" stroke-width="1.6"/><path d="M1083 777.5l6 6-6 6-6-6z" fill="#e8e8e8" stroke="#000" stroke-width="1.5"/><path d="M1083 779.5v8M1079 783.5h8" stroke="#000" stroke-width="1.3"/><path d="M1083 772.0v3.500M1083 791.5v3.500M1071.5 783.5h3.500M1091 783.5h3.500" stroke="#000" stroke-width="2"/><path d="M1073.5 804v8h21" fill="none" stroke="#333" stroke-width="1"/><path d="M1073.5 815v9h21" fill="none" stroke="#333" stroke-width="1"/><path d="M1074 811l4.500-5.500 2 2 2.500-2 3.500 4 3-2.500 2 3 2-1" fill="none" stroke="#c01840" stroke-width="1.2"/><path d="M1074 816l3 5 2.500-2 2 3.500 4-5.500 2 2.500 3.500-3.500 2 2" fill="none" stroke="#1a1a3a" stroke-width="1.3"/><rect x="1082" y="834" width="11" height="7" fill="#e8e8e8" stroke="#333" stroke-width="0.8"/><rect x="1090" y="834" width="3.500" height="7" fill="#3a2a8a"/><rect x="1072.5" y="838.5" width="15" height="14" fill="#fff" stroke="#000" stroke-width="1.4"/><path d="M1075 844.5h3M1079 844.5h6M1075 847h3M1079 847h6M1075 849.5h3M1079 849.5h6" stroke="#000" stroke-width="1.2"/><path d="M1077 840l3-4 3 4 3-4" fill="none" stroke="#000" stroke-width="1"/><circle cx="1081" cy="837" r="1.500" fill="none" stroke="#000" stroke-width="0.8"/><path d="M1078 870l3-6h11l-2.500 6z" fill="#fff" stroke="#000" stroke-width="1.3"/><path d="M1082 868l2-2 1.500 1.500 2-2" fill="none" stroke="#c01840" stroke-width="1"/><path d="M1072.5 873l4-3h16l-2.500 3zM1072.5 873v6l2 2.500h15l3-3v-8" fill="#e8e8e8" stroke="#000" stroke-width="1.4"/><path d="M1073 876.5h16.500l3-3" fill="none" stroke="#000" stroke-width="1.6"/><path d="M1074 879h15" stroke="#000" stroke-width="2"/><path d="M1080 874.5h5" stroke="#777" stroke-width="1"/></svg>
<svg style="left:1070px;top:892px;" width="20" height="6" viewBox="1070 892 20 6"><path d="M1074 893h9l-4.500 4z" fill="#000"/></svg>
<div class="r" style="left:1082px;top:902px;width:21px;height:15px;background:#d0d0d0"></div>
<svg style="left:1082px;top:902px;" width="21" height="15" viewBox="1082 902 21 15"><path d="M1091 905v8l-4-4zM1097 905v8l-4-4z" fill="#000"/></svg>
<div class="g" style="left:1114px;top:642px;width:144px;height:309px"></div>
<div style="left:1176px;top:640px;width:22px;height:5px;background:#d0d0d0;"></div>
<svg style="left:1176px;top:634px;" width="22" height="10" viewBox="1176 634 22 10"><path d="M1179 643h16l-8-7z" fill="#000"/></svg>
<div style="left:1122px;top:646px;font-size:12.2px;line-height:14px;transform:scaleX(0.87);transform-origin:0 50%;color:#000;"><span class="u">File</span></div>
<div style="left:1122px;top:660px;font-size:12.2px;line-height:14px;transform:scaleX(0.87);transform-origin:0 50%;color:#000;">1-C:\TEMP\1267.tmp</div>
<div style="left:1122px;top:686px;font-size:12.2px;line-height:14px;transform:scaleX(0.87);transform-origin:0 50%;color:#000;"><span class="u">Channel</span></div>
<div style="left:1122px;top:700px;font-size:12.2px;line-height:14px;transform:scaleX(0.87);transform-origin:0 50%;color:#000;">3-Channel 3</div>
<div style="left:1122px;top:735px;width:129px;height:203px;background:#000;"></div>
<div style="left:1123px;top:736px;width:127px;height:201px;background:#d0d0d0;"></div>
<div class="h" style="left:1235px;top:736px;width:15px;height:201px"></div>
<svg style="left:1122px;top:735px;font-family:inherit" width="129" height="203" viewBox="1122 735 129 203"><rect x="1138.5" y="735.5" width="12" height="12" fill="#d0d0d0" stroke="#000"/><text x="1144.5" y="745" font-size="10" text-anchor="middle">1</text><rect x="1150.5" y="735.5" width="12" height="12" fill="#d0d0d0" stroke="#000"/><text x="1156.5" y="745" font-size="10" text-anchor="middle">2</text><rect x="1162.5" y="735.5" width="12" height="12" fill="#d0d0d0" stroke="#000"/><text x="1168.5" y="745" font-size="10" text-anchor="middle">3</text><rect x="1174.5" y="735.5" width="12" height="12" fill="#d0d0d0" stroke="#000"/><text x="1180.5" y="745" font-size="10" text-anchor="middle">4</text><rect x="1186.5" y="735.5" width="12" height="12" fill="#d0d0d0" stroke="#000"/><text x="1192.5" y="745" font-size="10" text-anchor="middle">5</text><rect x="1198.5" y="735.5" width="12" height="12" fill="#d0d0d0" stroke="#000"/><text x="1204.5" y="745" font-size="10" text-anchor="middle">6</text><rect x="1210.5" y="735.5" width="12" height="12" fill="#d0d0d0" stroke="#000"/><text x="1216.5" y="745" font-size="10" text-anchor="middle">7</text><rect x="1222.5" y="735.5" width="12" height="12" fill="#d0d0d0" stroke="#000"/><text x="1228.5" y="745" font-size="10" text-anchor="middle">8</text><rect x="1122.5" y="735.5" width="16" height="12" fill="#d0d0d0" stroke="#000"/><rect x="1139" y="747.5" width="11.5" height="11.9" fill="#2b3a9a"/><rect x="1122.5" y="747.5" width="16" height="11.9" fill="#d0d0d0" stroke="#000"/><text x="1127.5" y="757.4" font-size="10" text-anchor="middle">1</text><rect x="1139" y="759.4" width="11.5" height="11.9" fill="#fff"/><rect x="1122.5" y="759.4" width="16" height="11.9" fill="#d0d0d0" stroke="#000"/><text x="1127.5" y="769.3" font-size="10" text-anchor="middle">2</text><rect x="1139" y="771.3" width="11.5" height="11.9" fill="#fff"/><rect x="1122.5" y="771.3" width="16" height="11.9" fill="#d0d0d0" stroke="#000"/><text x="1127.5" y="781.2" font-size="10" text-anchor="middle">3</text><rect x="1139" y="783.2" width="11.5" height="11.9" fill="#fff"/><rect x="1122.5" y="783.2" width="16" height="11.9" fill="#d0d0d0" stroke="#000"/><text x="1127.5" y="793.1" font-size="10" text-anchor="middle">4</text><rect x="1139" y="795.1" width="11.5" height="11.9" fill="#fff"/><rect x="1122.5" y="795.1" width="16" height="11.9" fill="#d0d0d0" stroke="#000"/><text x="1127.5" y="805.0" font-size="10" text-anchor="middle">5</text><rect x="1139" y="807.0" width="11.5" height="11.9" fill="#fff"/><rect x="1122.5" y="807.0" width="16" height="11.9" fill="#d0d0d0" stroke="#000"/><text x="1127.5" y="816.9" font-size="10" text-anchor="middle">6</text><rect x="1139" y="818.9" width="11.5" height="11.9" fill="#fff"/><rect x="1122.5" y="818.9" width="16" height="11.9" fill="#d0d0d0" stroke="#000"/><text x="1127.5" y="828.8" font-size="10" text-anchor="middle">7</text><rect x="1139" y="830.8" width="11.5" height="11.9" fill="#fff"/><rect x="1122.5" y="830.8" width="16" height="11.9" fill="#d0d0d0" stroke="#000"/><text x="1127.5" y="840.7" font-size="10" text-anchor="middle">8</text><rect x="1122.5" y="842.7" width="16" height="11.9" fill="#d0d0d0" stroke="#000"/><text x="1127.5" y="852.6" font-size="10" text-anchor="middle">9</text><rect x="1122.5" y="854.6" width="16" height="11.9" fill="#d0d0d0" stroke="#000"/><text x="1130.5" y="864.5" font-size="10" text-anchor="middle">10</text><rect x="1122.5" y="866.5" width="16" height="11.9" fill="#d0d0d0" stroke="#000"/><text x="1130.5" y="876.4" font-size="10" text-anchor="middle">11</text><rect x="1122.5" y="878.4" width="16" height="11.9" fill="#d0d0d0" stroke="#000"/><text x="1130.5" y="888.3" font-size="10" text-anchor="middle">12</text><rect x="1122.5" y="890.3" width="16" height="11.9" fill="#d0d0d0" stroke="#000"/><text x="1130.5" y="900.2" font-size="10" text-anchor="middle">13</text><rect x="1122.5" y="902.2" width="16" height="11.9" fill="#d0d0d0" stroke="#000"/><text x="1130.5" y="912.1" font-size="10" text-anchor="middle">14</text><rect x="1122.5" y="914.1" width="16" height="11.9" fill="#d0d0d0" stroke="#000"/><text x="1130.5" y="924.0" font-size="10" text-anchor="middle">15</text><rect x="1122.5" y="926.0" width="16" height="11.9" fill="#d0d0d0" stroke="#000"/><text x="1130.5" y="935.9" font-size="10" text-anchor="middle">16</text></svg>
<div class="r" style="left:1235px;top:749px;width:15px;height:14px;background:#d0d0d0"></div>
<svg style="left:1235px;top:749px;" width="15" height="14" viewBox="1235 749 15 14"><path d="M1239 758h7l-3.5-4z" fill="#000"/></svg>
<div class="r" style="left:1235px;top:763px;width:15px;height:15px;background:#d0d0d0"></div>
<div class="r" style="left:1235px;top:924px;width:15px;height:14px;background:#d0d0d0"></div>
<svg style="left:1235px;top:924px;" width="15" height="14" viewBox="1235 924 15 14"><path d="M1239 929h7l-3.500 4z" fill="#000"/></svg>
<div style="left:1122px;top:945px;width:129px;height:1px;background:#404040;"></div>
<div style="left:1122px;top:946px;width:129px;height:1px;background:#fff;"></div>
<div style="left:1176px;top:949px;width:22px;height:4px;background:#d0d0d0;"></div>
<svg style="left:1176px;top:948px;" width="22" height="8" viewBox="1176 948 22 8"><path d="M1179 949h16l-8 7z" fill="#000"/></svg>
<div style="left:837px;top:74px;width:427px;height:252px;background:#d0d0d0;border:1px solid;border-color:#e0e0e0 #1a1a1a #1a1a1a #e0e0e0;box-shadow:inset 1px 1px 0 #fff,inset -1px -1px 0 #808080"></div>
<div style="left:841px;top:78px;width:419px;height:19px;background:#747474;"></div>
<div style="left:861px;top:81px;font-size:12px;line-height:14px;color:#dcdcdc;font-weight:bold;">Project Explorer</div>
<div class="r2" style="left:1208px;top:81px;width:15px;height:13px;background:#d0d0d0"></div>
<div style="left:1212px;top:90px;width:6px;height:2px;background:#000;"></div>
<div class="r2" style="left:1224px;top:81px;width:15px;height:13px;background:#d0d0d0"></div>
<div style="left:1227px;top:83px;width:9px;height:8px;border:1px solid #000;border-top-width:2px"></div>
<div class="r2" style="left:1242px;top:81px;width:15px;height:13px;background:#d0d0d0"></div>
<svg style="left:1245px;top:83px;" width="9" height="9" viewBox="1245 83 9 9"><path d="M1246 84l7 7M1253 84l-7 7" stroke="#000" stroke-width="1.6" fill="none"/></svg>
<svg style="left:844px;top:79px;" width="16" height="17" viewBox="844 79 16 17"><rect x="846.500" y="80.500" width="11" height="14" rx="1" fill="#c8b070" stroke="#111"/><path d="M845 82.500h3M845 85h3M845 87.500h3M845 90h3M845 92.500h3" stroke="#111"/><rect x="850" y="82" width="6" height="3" fill="#eee" stroke="#111" stroke-width="0.7"/><circle cx="852.500" cy="89.500" r="3.800" fill="#e8f0f0" stroke="#111" stroke-width="1.3"/><path d="M855.500 92.500l3 3" stroke="#111" stroke-width="1.8"/></svg>
<div style="left:841px;top:98px;font-size:12.2px;line-height:14px;transform:scaleX(0.87);transform-origin:0 50%;color:#000;">SAE2000: Analyze: Edit and Analysis: Edit1: Time Histories</div>
<div class="s2" style="left:843px;top:113px;width:229px;height:215px;background:#fff"></div>
<svg style="left:845px;top:115px;font-family:inherit" width="225" height="211" viewBox="845 115 225 211"><path d="M872.5 129V315" stroke="#808080" stroke-dasharray="1 1"/><path d="M892.5 193V203" stroke="#808080" stroke-dasharray="1 1"/><path d="M912.5 209V299" stroke="#808080" stroke-dasharray="1 1"/><path d="M932.5 225V283" stroke="#808080" stroke-dasharray="1 1"/><path d="M857 123.5H866" stroke="#808080" stroke-dasharray="1 1"/><rect x="847.5" y="118.5" width="9" height="9" fill="#fff" stroke="#808080"/><path d="M850 123.5h5" stroke="#000"/><path d="M867.5 128.5h13v-3.500h-13z" fill="#e8d060" stroke="#333" stroke-width="0.9"/><rect x="868" y="123" width="4" height="3" fill="#f4f4f4" stroke="#333" stroke-width="0.7"/><rect x="876" y="123" width="4" height="3" fill="#f0d850" stroke="#333" stroke-width="0.7"/><path d="M874 115.5l3.500 3.500h-7z" fill="#208080"/><path d="M872.5 118.5h3" stroke="#111"/><rect x="872" y="120" width="4" height="5.500" fill="#c03030"/><path d="M877 118l3 2-2 2" stroke="#333" fill="none" stroke-width="0.9"/><text x="886" y="127" font-size="12.2" textLength="44.8" lengthAdjust="spacingAndGlyphs" text-anchor="start" fill="#000">SAE2000</text><path d="M872 139.5H884" stroke="#808080" stroke-dasharray="1 1"/><path d="M885.5 134.5v9h12v-8h-6l-1.500-1.500h-3z" fill="#f3e98c" stroke="#6b6330" stroke-width="1"/><path d="M886.5 143.5h11.500v-7.500" stroke="#222" fill="none" stroke-width="1"/><text x="905" y="143" font-size="12.2" textLength="70.2" lengthAdjust="spacingAndGlyphs" text-anchor="start" fill="#000">Project Record</text><path d="M872 155.5H884" stroke="#808080" stroke-dasharray="1 1"/><rect x="867.5" y="150.5" width="9" height="9" fill="#fff" stroke="#808080"/><path d="M870 155.5h5" stroke="#000"/><path d="M872.5 153v5" stroke="#000"/><rect x="887" y="147" width="10" height="9" fill="#4a6a7a" stroke="#222"/><path d="M885 162l6-7 7 6-3 2-4-4-3 4z" fill="#222"/><path d="M892 155l3 3-3 3-3-3z" fill="#ddd" stroke="#222" stroke-width="0.6"/><text x="905" y="159" font-size="12.2" textLength="27.7" lengthAdjust="spacingAndGlyphs" text-anchor="start" fill="#000">Setup</text><path d="M872 171.5H884" stroke="#808080" stroke-dasharray="1 1"/><rect x="885.5" y="166.5" width="11" height="11" fill="#8aa0a8" stroke="#111" stroke-width="1.4"/><path d="M889 166v-2h9v8h-2" fill="none" stroke="#111" stroke-width="1.4"/><path d="M885 164l12 14" stroke="#111" stroke-width="2"/><text x="905" y="175" font-size="12.2" textLength="36.0" lengthAdjust="spacingAndGlyphs" text-anchor="start" fill="#000">Acquire</text><path d="M872 187.5H884" stroke="#808080" stroke-dasharray="1 1"/><rect x="867.5" y="182.5" width="9" height="9" fill="#fff" stroke="#808080"/><path d="M870 187.5h5" stroke="#000"/><rect x="885.5" y="182.5" width="11" height="11" fill="#8aa0a8" stroke="#111" stroke-width="1.4"/><path d="M889 182v-2h9v8h-2" fill="none" stroke="#111" stroke-width="1.4"/><path d="M885 180l12 14" stroke="#111" stroke-width="2"/><text x="905" y="191" font-size="12.2" textLength="37.8" lengthAdjust="spacingAndGlyphs" text-anchor="start" fill="#000">Analyze</text><path d="M892 203.5H904" stroke="#808080" stroke-dasharray="1 1"/><rect x="887.5" y="198.5" width="9" height="9" fill="#fff" stroke="#808080"/><path d="M890 203.5h5" stroke="#000"/><path d="M905.5 198.5v9h12v-8h-6l-1.500-1.500h-3z" fill="#f2d898" stroke="#6b6330" stroke-width="1"/><path d="M906.5 207.5h11.500v-7.500" stroke="#222" fill="none" stroke-width="1"/><rect x="910" y="201.5" width="3.500" height="3.500" fill="#a03818"/><text x="925" y="207" font-size="12.2" textLength="80.8" lengthAdjust="spacingAndGlyphs" text-anchor="start" fill="#000">Edit and Analysis</text><path d="M912 219.5H924" stroke="#808080" stroke-dasharray="1 1"/><rect x="907.5" y="214.5" width="9" height="9" fill="#fff" stroke="#808080"/><path d="M910 219.5h5" stroke="#000"/><path d="M925.5 214.5v9h12v-8h-6l-1.500-1.500h-3z" fill="#f2d898" stroke="#6b6330" stroke-width="1"/><path d="M926.5 223.5h11.500v-7.500" stroke="#222" fill="none" stroke-width="1"/><rect x="930" y="217.5" width="3.500" height="3.500" fill="#a03818"/><text x="945" y="223" font-size="12.2" textLength="24.2" lengthAdjust="spacingAndGlyphs" text-anchor="start" fill="#000">Edit1</text><path d="M932 235.5H944" stroke="#808080" stroke-dasharray="1 1"/><path d="M945.5 230.5v9h12v-8h-6l-1.500-1.500h-3z" fill="#f3e98c" stroke="#6b6330" stroke-width="1"/><path d="M946.5 239.5h11.500v-7.500" stroke="#222" fill="none" stroke-width="1"/><text x="965" y="239" font-size="12.2" textLength="40.1" lengthAdjust="spacingAndGlyphs" text-anchor="start" fill="#000">Matrices</text><path d="M932 251.5H944" stroke="#808080" stroke-dasharray="1 1"/><path d="M945.5 246.5v9h12v-8h-6l-1.500-1.500h-3z" fill="#f3e98c" stroke="#6b6330" stroke-width="1"/><path d="M946.5 255.5h11.500v-7.500" stroke="#222" fill="none" stroke-width="1"/><text x="965" y="255" font-size="12.2" textLength="21.8" lengthAdjust="spacingAndGlyphs" text-anchor="start" fill="#000">Misc</text><path d="M932 267.5H944" stroke="#808080" stroke-dasharray="1 1"/><path d="M945.5 262.5v9h12v-8h-6l-1.500-1.500h-3z" fill="#f3e98c" stroke="#6b6330" stroke-width="1"/><path d="M946.5 271.5h11.500v-7.500" stroke="#222" fill="none" stroke-width="1"/><text x="965" y="271" font-size="12.2" textLength="53.7" lengthAdjust="spacingAndGlyphs" text-anchor="start" fill="#000">Histograms</text><path d="M932 283.5H944" stroke="#808080" stroke-dasharray="1 1"/><path d="M945.5 278.5v9h10v-8h-5l-1.500-1.500h-2z" fill="#f3e98c" stroke="#333" stroke-width="1"/><path d="M945.5 287.5l3.500-5.500h10.500l-3.500 5.500z" fill="#fffbd0" stroke="#222" stroke-width="1"/><rect x="963" y="275" width="72" height="16" fill="#d0d0d0"/><text x="965" y="287" font-size="12.2" textLength="67.4" lengthAdjust="spacingAndGlyphs" text-anchor="start" fill="#000">Time Histories</text><path d="M912 299.5H924" stroke="#808080" stroke-dasharray="1 1"/><rect x="907.5" y="294.5" width="9" height="9" fill="#fff" stroke="#808080"/><path d="M910 299.5h5" stroke="#000"/><path d="M912.5 297v5" stroke="#000"/><path d="M925.5 294.5v9h12v-8h-6l-1.500-1.500h-3z" fill="#f3e98c" stroke="#6b6330" stroke-width="1"/><path d="M926.5 303.5h11.500v-7.500" stroke="#222" fill="none" stroke-width="1"/><text x="945" y="303" font-size="12.2" textLength="49.0" lengthAdjust="spacingAndGlyphs" text-anchor="start" fill="#000">Reference</text><path d="M872 315.5H884" stroke="#808080" stroke-dasharray="1 1"/><rect x="867.5" y="310.5" width="9" height="9" fill="#fff" stroke="#808080"/><path d="M870 315.5h5" stroke="#000"/><path d="M872.5 313v5" stroke="#000"/><path d="M886 309h6v5h-6z" fill="#222"/><path d="M893 310l4 2-2 3" stroke="#3a3a9a" fill="none" stroke-width="1.5"/><path d="M887 321l7-7M888 315l7 6" stroke="#222" stroke-width="1.6"/><text x="905" y="319" font-size="12.2" textLength="28.9" lengthAdjust="spacingAndGlyphs" text-anchor="start" fill="#000">Model</text></svg>
<div class="s2" style="left:1077px;top:113px;width:181px;height:215px;background:#fff"></div>
<div class="r" style="left:1079px;top:115px;width:177px;height:17px;background:#d0d0d0"></div>
<div style="left:1085px;top:117px;font-size:12.2px;line-height:14px;transform:scaleX(0.87);transform-origin:0 50%;color:#000;">Name</div>
<svg style="left:1079px;top:132px;font-family:inherit" width="177" height="194" viewBox="1079 132 177 194"><rect x="1097" y="134" width="68" height="16" fill="#d0d0d0"/><path d="M1082.5 134.5h10l3 3v12.500h-13z" fill="#fff" stroke="#000"/><path d="M1085.5 142a3.500 3.500 0 0 1 6-2.500M1092.5 143.5a3.500 3.500 0 0 1 -6 2.500" stroke="#6a1a2a" stroke-width="1.6" fill="none"/><path d="M1090 137l2.500 3-3.500 0.500zM1088 148.5l-2.500-3 3.500-0.500z" fill="#6a1a2a"/><text x="1099" y="147" font-size="12.2" textLength="59.0" lengthAdjust="spacingAndGlyphs" text-anchor="start" fill="#000">EDITED_TH</text><path d="M1082.5 151.5h10l3 3v12.500h-13z" fill="#fff" stroke="#000"/><path d="M1085.5 159a3.500 3.500 0 0 1 6-2.500M1092.5 160.5a3.500 3.500 0 0 1 -6 2.500" stroke="#6a1a2a" stroke-width="1.6" fill="none"/><path d="M1090 154l2.500 3-3.500 0.500zM1088 165.5l-2.500-3 3.500-0.500z" fill="#6a1a2a"/><text x="1099" y="164" font-size="12.2" textLength="86.1" lengthAdjust="spacingAndGlyphs" text-anchor="start" fill="#000">EDITED_TH_EDT</text><path d="M1082.5 168.5h10l3 3v12.500h-13z" fill="#fff" stroke="#000"/><path d="M1085.5 176a3.500 3.500 0 0 1 6-2.500M1092.5 177.5a3.500 3.500 0 0 1 -6 2.500" stroke="#6a1a2a" stroke-width="1.6" fill="none"/><path d="M1090 171l2.500 3-3.500 0.500zM1088 182.5l-2.500-3 3.500-0.500z" fill="#6a1a2a"/><text x="1099" y="181" font-size="12.2" textLength="80.2" lengthAdjust="spacingAndGlyphs" text-anchor="start" fill="#000">EDITED_TH_FIL</text><path d="M1082.5 185.5h10l3 3v12.500h-13z" fill="#fff" stroke="#000"/><path d="M1085.5 193a3.500 3.500 0 0 1 6-2.500M1092.5 194.5a3.500 3.500 0 0 1 -6 2.500" stroke="#6a1a2a" stroke-width="1.6" fill="none"/><path d="M1090 188l2.500 3-3.500 0.500zM1088 199.5l-2.500-3 3.500-0.500z" fill="#6a1a2a"/><text x="1099" y="198" font-size="12.2" textLength="75.7" lengthAdjust="spacingAndGlyphs" text-anchor="start" fill="#000">Track_data_raw</text></svg>
<div style="left:2px;top:74px;width:834px;height:548px;background:#d0d0d0;border:1px solid;border-color:#e0e0e0 #1a1a1a #1a1a1a #e0e0e0;box-shadow:inset 1px 1px 0 #fff,inset -1px -1px 0 #808080"></div>
<div style="left:6px;top:78px;width:826px;height:19px;background:#747474;"></div>
<div style="left:27px;top:81px;font-size:12px;line-height:14px;color:#dcdcdc;font-weight:bold;">Editing</div>
<div class="r2" style="left:780px;top:81px;width:15px;height:13px;background:#d0d0d0"></div>
<div style="left:784px;top:90px;width:6px;height:2px;background:#000;"></div>
<div class="r2" style="left:796px;top:81px;width:15px;height:13px;background:#d0d0d0"></div>
<div style="left:799px;top:83px;width:9px;height:8px;border:1px solid #000;border-top-width:2px"></div>
<div class="r2" style="left:814px;top:81px;width:15px;height:13px;background:#d0d0d0"></div>
<svg style="left:817px;top:83px;" width="9" height="9" viewBox="817 83 9 9"><path d="M818 84l7 7M825 84l-7 7" stroke="#000" stroke-width="1.6" fill="none"/></svg>
<svg style="left:8px;top:79px;" width="17" height="16" viewBox="8 79 17 16"><path d="M10 82h5l1 2h7v10h-13z" fill="#e8e8e8" stroke="#333" stroke-width="0.8"/><rect x="10.500" y="86.500" width="7" height="7" fill="#fff" stroke="#111"/><rect x="11" y="87" width="6" height="2" fill="#111"/></svg>
<div class="g" style="left:18px;top:114px;width:803px;height:341px"></div>
<div style="left:25px;top:113px;width:68px;height:3px;background:#d0d0d0;"></div>
<div style="left:27px;top:109px;font-size:12.2px;line-height:14px;transform:scaleX(0.87);transform-origin:0 50%;color:#b01030;">Visual Editing</div>
<div style="left:34px;top:131px;width:536px;height:279px;background:#fff;"></div>
<div style="left:34px;top:132px;font-size:12.4px;line-height:14.4px;color:#000;">EDITED_TH, 7, strain3</div>
<svg style="left:34px;top:131px;" width="536" height="279" viewBox="34 131 536 279"><rect x="153" y="152" width="4" height="194" fill="#d6d6e6"/><rect x="231" y="152" width="23" height="194" fill="#f6d6d6"/><rect x="308" y="152" width="23" height="194" fill="#f6d6d6"/><rect x="402" y="152" width="55" height="194" fill="#f6d6d6"/><rect x="543" y="152" width="16" height="194" fill="#d6d6e6"/><path d="M112 151.5H559" stroke="#000" stroke-width="1" stroke-dasharray="1 5.8"/><path d="M112 200.5H559" stroke="#000" stroke-width="1" stroke-dasharray="1 5.8"/><path d="M112 298.5H559" stroke="#000" stroke-width="1" stroke-dasharray="1 5.8"/><path d="M227.5 152V346" stroke="#000" stroke-width="1" stroke-dasharray="1 5.8"/><path d="M343.5 152V346" stroke="#000" stroke-width="1" stroke-dasharray="1 5.8"/><path d="M460.5 152V346" stroke="#000" stroke-width="1" stroke-dasharray="1 5.8"/><path d="M110 220h1v70h-1zM111 221h1v45h-1zM112 224h1v54h-1zM113 224h1v49h-1zM114 218h1v47h-1zM115 237h1v26h-1zM116 235h1v47h-1zM117 231h1v41h-1zM118 231h1v42h-1zM119 218h1v47h-1zM120 233h1v44h-1zM121 212h1v73h-1zM122 230h1v40h-1zM123 201h1v75h-1zM124 219h1v65h-1zM125 199h1v96h-1zM126 224h1v68h-1zM127 222h1v72h-1zM128 222h1v58h-1zM129 230h1v47h-1zM130 230h1v53h-1zM131 230h1v43h-1zM132 236h1v31h-1zM133 238h1v24h-1zM134 240h1v26h-1zM135 219h1v39h-1zM136 234h1v24h-1zM137 243h1v37h-1zM138 238h1v73h-1zM139 239h1v41h-1zM140 238h1v26h-1zM141 238h1v27h-1zM142 237h1v34h-1zM143 226h1v55h-1zM144 205h1v108h-1zM145 227h1v36h-1zM146 228h1v34h-1zM147 237h1v46h-1zM148 236h1v26h-1zM149 236h1v34h-1zM150 224h1v51h-1zM151 232h1v47h-1zM152 229h1v53h-1zM153 242h1v21h-1zM154 241h1v17h-1zM155 238h1v25h-1zM156 241h1v16h-1zM157 232h1v23h-1zM158 236h1v24h-1zM159 220h1v51h-1zM160 236h1v41h-1zM161 232h1v39h-1zM162 233h1v36h-1zM163 219h1v57h-1zM164 232h1v38h-1zM165 227h1v51h-1zM166 231h1v43h-1zM167 226h1v44h-1zM168 225h1v60h-1zM169 222h1v62h-1zM170 232h1v55h-1zM171 223h1v42h-1zM172 208h1v58h-1zM173 229h1v45h-1zM174 225h1v44h-1zM175 239h1v24h-1zM176 239h1v25h-1zM177 237h1v24h-1zM178 239h1v18h-1zM179 240h1v20h-1zM180 240h1v19h-1zM181 242h1v15h-1zM182 238h1v24h-1zM183 217h1v52h-1zM184 233h1v57h-1zM185 235h1v27h-1zM186 239h1v19h-1zM187 240h1v21h-1zM188 240h1v20h-1zM189 238h1v25h-1zM190 240h1v17h-1zM191 240h1v25h-1zM192 238h1v25h-1zM193 236h1v31h-1zM194 235h1v29h-1zM195 220h1v59h-1zM196 219h1v38h-1zM197 234h1v38h-1zM198 235h1v23h-1zM199 241h1v17h-1zM200 240h1v16h-1zM201 233h1v24h-1zM202 240h1v26h-1zM203 238h1v43h-1zM204 216h1v45h-1zM205 230h1v36h-1zM206 228h1v46h-1zM207 211h1v61h-1zM208 230h1v58h-1zM209 229h1v48h-1zM210 212h1v55h-1zM211 232h1v43h-1zM212 199h1v77h-1zM213 224h1v47h-1zM214 218h1v76h-1zM215 241h1v24h-1zM216 239h1v35h-1zM217 239h1v19h-1zM218 235h1v35h-1zM219 234h1v26h-1zM220 241h1v18h-1zM221 243h1v12h-1zM222 237h1v29h-1zM223 223h1v41h-1zM224 235h1v38h-1zM225 229h1v50h-1zM226 234h1v36h-1zM227 233h1v49h-1zM228 226h1v48h-1zM229 225h1v47h-1zM230 236h1v26h-1zM231 234h1v31h-1zM232 234h1v36h-1zM233 220h1v59h-1zM234 238h1v58h-1zM235 239h1v38h-1zM236 236h1v27h-1zM237 221h1v39h-1zM238 233h1v35h-1zM239 240h1v25h-1zM240 238h1v44h-1zM241 232h1v29h-1zM242 239h1v20h-1zM243 238h1v21h-1zM244 237h1v32h-1zM245 229h1v40h-1zM246 221h1v63h-1zM247 228h1v40h-1zM248 215h1v53h-1zM249 218h1v50h-1zM250 227h1v47h-1zM251 230h1v50h-1zM252 228h1v83h-1zM253 234h1v42h-1zM254 235h1v36h-1zM255 233h1v44h-1zM256 231h1v45h-1zM257 235h1v42h-1zM258 210h1v95h-1zM259 224h1v47h-1zM260 232h1v34h-1zM261 230h1v41h-1zM262 229h1v60h-1zM263 216h1v66h-1zM264 230h1v50h-1zM265 221h1v61h-1zM266 212h1v76h-1zM267 224h1v103h-1zM268 202h1v81h-1zM269 218h1v84h-1zM270 222h1v97h-1zM271 222h1v64h-1zM272 226h1v67h-1zM273 205h1v132h-1zM274 213h1v64h-1zM275 214h1v73h-1zM276 183h1v141h-1zM277 216h1v53h-1zM278 219h1v50h-1zM279 223h1v65h-1zM280 164h1v163h-1zM281 207h1v68h-1zM282 235h1v66h-1zM283 232h1v33h-1zM284 237h1v26h-1zM285 236h1v21h-1zM286 237h1v21h-1zM287 240h1v27h-1zM288 237h1v47h-1zM289 233h1v40h-1zM290 228h1v34h-1zM291 213h1v50h-1zM292 231h1v34h-1zM293 234h1v59h-1zM294 233h1v36h-1zM295 226h1v39h-1zM296 240h1v42h-1zM297 239h1v20h-1zM298 238h1v28h-1zM299 239h1v25h-1zM300 219h1v42h-1zM301 234h1v46h-1zM302 235h1v29h-1zM303 221h1v38h-1zM304 234h1v33h-1zM305 239h1v25h-1zM306 236h1v43h-1zM307 239h1v28h-1zM308 227h1v33h-1zM309 233h1v32h-1zM310 227h1v37h-1zM311 230h1v41h-1zM312 231h1v36h-1zM313 223h1v46h-1zM314 232h1v41h-1zM315 221h1v46h-1zM316 231h1v36h-1zM317 233h1v51h-1zM318 222h1v63h-1zM319 238h1v26h-1zM320 235h1v30h-1zM321 233h1v33h-1zM322 239h1v26h-1zM323 239h1v26h-1zM324 238h1v31h-1zM325 215h1v74h-1zM326 232h1v27h-1zM327 240h1v18h-1zM328 236h1v21h-1zM329 216h1v58h-1zM330 233h1v66h-1zM331 239h1v21h-1zM332 237h1v51h-1zM333 235h1v92h-1zM334 237h1v43h-1zM335 236h1v75h-1zM336 231h1v73h-1zM337 235h1v25h-1zM338 242h1v20h-1zM339 241h1v16h-1zM340 242h1v13h-1zM341 240h1v17h-1zM342 237h1v54h-1zM343 199h1v135h-1zM344 224h1v55h-1zM345 241h1v68h-1zM346 235h1v25h-1zM347 241h1v22h-1zM348 238h1v20h-1zM349 236h1v27h-1zM350 217h1v50h-1zM351 230h1v33h-1zM352 231h1v46h-1zM353 230h1v49h-1zM354 217h1v48h-1zM355 223h1v48h-1zM356 224h1v43h-1zM357 221h1v50h-1zM358 224h1v50h-1zM359 233h1v32h-1zM360 235h1v29h-1zM361 237h1v32h-1zM362 223h1v47h-1zM363 232h1v37h-1zM364 236h1v39h-1zM365 222h1v46h-1zM366 229h1v35h-1zM367 219h1v53h-1zM368 229h1v54h-1zM369 232h1v42h-1zM370 230h1v34h-1zM371 231h1v36h-1zM372 230h1v35h-1zM373 231h1v48h-1zM374 229h1v38h-1zM375 217h1v63h-1zM376 225h1v68h-1zM377 232h1v43h-1zM378 232h1v39h-1zM379 228h1v67h-1zM380 237h1v104h-1zM381 202h1v68h-1zM382 225h1v36h-1zM383 237h1v24h-1zM384 237h1v24h-1zM385 239h1v27h-1zM386 238h1v21h-1zM387 229h1v41h-1zM388 231h1v32h-1zM389 238h1v30h-1zM390 237h1v42h-1zM391 239h1v24h-1zM392 230h1v34h-1zM393 238h1v31h-1zM394 236h1v25h-1zM395 219h1v51h-1zM396 226h1v39h-1zM397 234h1v49h-1zM398 225h1v45h-1zM399 231h1v52h-1zM400 230h1v49h-1zM401 208h1v58h-1zM402 229h1v45h-1zM403 234h1v29h-1zM404 237h1v21h-1zM405 230h1v31h-1zM406 239h1v20h-1zM407 239h1v42h-1zM408 239h1v25h-1zM409 239h1v28h-1zM410 221h1v56h-1zM411 238h1v31h-1zM412 234h1v56h-1zM413 231h1v37h-1zM414 238h1v28h-1zM415 237h1v27h-1zM416 236h1v33h-1zM417 235h1v30h-1zM418 221h1v56h-1zM419 232h1v46h-1zM420 233h1v43h-1zM421 226h1v51h-1zM422 231h1v32h-1zM423 235h1v30h-1zM424 235h1v26h-1zM425 237h1v39h-1zM426 239h1v19h-1zM427 240h1v26h-1zM428 239h1v29h-1zM429 237h1v25h-1zM430 221h1v57h-1zM431 234h1v42h-1zM432 237h1v24h-1zM433 231h1v30h-1zM434 237h1v27h-1zM435 238h1v41h-1zM436 238h1v24h-1zM437 218h1v44h-1zM438 233h1v27h-1zM439 231h1v45h-1zM440 234h1v43h-1zM441 226h1v34h-1zM442 236h1v45h-1zM443 192h1v121h-1zM444 221h1v38h-1zM445 242h1v15h-1zM446 244h1v15h-1zM447 244h1v23h-1zM448 243h1v42h-1zM449 242h1v17h-1zM450 236h1v21h-1zM451 233h1v26h-1zM452 229h1v35h-1zM453 232h1v54h-1zM454 236h1v87h-1zM455 234h1v35h-1zM456 230h1v41h-1zM457 233h1v40h-1zM458 194h1v82h-1zM459 221h1v52h-1zM460 224h1v73h-1zM461 207h1v139h-1zM462 217h1v70h-1zM463 227h1v97h-1zM464 227h1v53h-1zM465 223h1v66h-1zM466 209h1v120h-1zM467 228h1v35h-1zM468 230h1v41h-1zM469 223h1v70h-1zM470 235h1v102h-1zM471 218h1v47h-1zM472 224h1v69h-1zM473 182h1v155h-1zM474 215h1v85h-1zM475 216h1v67h-1zM476 164h1v153h-1zM477 207h1v80h-1zM478 230h1v69h-1zM479 230h1v50h-1zM480 237h1v27h-1zM481 233h1v28h-1zM482 227h1v42h-1zM483 229h1v58h-1zM484 228h1v37h-1zM485 228h1v39h-1zM486 213h1v45h-1zM487 231h1v41h-1zM488 240h1v15h-1zM489 244h1v37h-1zM490 219h1v94h-1zM491 234h1v27h-1zM492 235h1v24h-1zM493 234h1v32h-1zM494 235h1v32h-1zM495 237h1v47h-1zM496 235h1v39h-1zM497 236h1v29h-1zM498 237h1v25h-1zM499 215h1v56h-1zM500 232h1v35h-1zM501 228h1v55h-1zM502 225h1v91h-1zM503 203h1v84h-1zM504 218h1v81h-1zM505 226h1v49h-1zM506 223h1v53h-1zM507 233h1v32h-1zM508 227h1v38h-1zM509 237h1v35h-1zM510 229h1v64h-1zM511 224h1v49h-1zM512 224h1v39h-1zM513 226h1v39h-1zM514 223h1v43h-1zM515 218h1v72h-1zM516 199h1v91h-1zM517 232h1v58h-1zM518 228h1v45h-1zM519 222h1v51h-1zM520 232h1v55h-1zM521 214h1v59h-1zM522 231h1v51h-1zM523 231h1v46h-1zM524 226h1v52h-1zM525 228h1v37h-1zM526 234h1v37h-1zM527 229h1v35h-1zM528 221h1v52h-1zM529 232h1v36h-1zM530 231h1v38h-1zM531 236h1v40h-1zM532 239h1v26h-1zM533 208h1v74h-1zM534 229h1v32h-1zM535 237h1v28h-1zM536 234h1v32h-1zM537 221h1v46h-1zM538 231h1v50h-1zM539 222h1v47h-1zM540 236h1v47h-1zM541 183h1v134h-1zM542 216h1v56h-1z" fill="#0c0c0c" shape-rendering="crispEdges"/><path d="M543 249.5H559" stroke="#000"/><path d="M110.5 151V346.500H559" stroke="#000" fill="none"/><path d="M107 347.5H114" stroke="#000"/><path d="M107 322.5H114" stroke="#000"/><path d="M107 298.5H114" stroke="#000"/><path d="M107 274.5H114" stroke="#000"/><path d="M107 249.5H114" stroke="#000"/><path d="M107 224.5H114" stroke="#000"/><path d="M107 200.5H114" stroke="#000"/><path d="M107 176.5H114" stroke="#000"/><path d="M107 151.5H114" stroke="#000"/><path d="M110.5 343V350" stroke="#000"/><path d="M168.5 343V350" stroke="#000"/><path d="M227.5 343V350" stroke="#000"/><path d="M285.5 343V350" stroke="#000"/><path d="M343.5 343V350" stroke="#000"/><path d="M402.5 343V350" stroke="#000"/><path d="M460.5 343V350" stroke="#000"/><path d="M518.5 343V350" stroke="#000"/></svg>
<div style="left:-94px;width:200px;text-align:right;top:145px;font-size:12.4px;line-height:14.4px;color:#000;">2000</div>
<div style="left:-94px;width:200px;text-align:right;top:194px;font-size:12.4px;line-height:14.4px;color:#000;">1000</div>
<div style="left:-94px;width:200px;text-align:right;top:243px;font-size:12.4px;line-height:14.4px;color:#000;">0</div>
<div style="left:-94px;width:200px;text-align:right;top:292px;font-size:12.4px;line-height:14.4px;color:#000;">-1000</div>
<div style="left:-94px;width:200px;text-align:right;top:341px;font-size:12.4px;line-height:14.4px;color:#000;">-2000</div>
<div style="left:101px;width:18px;text-align:center;top:356px;font-size:12.4px;line-height:14.4px;color:#000;">0</div>
<div style="left:211px;width:32px;text-align:center;top:356px;font-size:12.4px;line-height:14.4px;color:#000;">100</div>
<div style="left:327px;width:32px;text-align:center;top:356px;font-size:12.4px;line-height:14.4px;color:#000;">200</div>
<div style="left:444px;width:32px;text-align:center;top:356px;font-size:12.4px;line-height:14.4px;color:#000;">300</div>
<div style="left:297px;width:72px;text-align:center;top:376px;font-size:12.4px;line-height:14.4px;color:#000;">Time(secs)</div>
<div style="left:10px;top:241px;width:100px;text-align:center;font-size:12.4px;line-height:15px;transform:rotate(-90deg)">uE</div>
<div class="r" style="left:34px;top:418px;width:21px;height:21px;background:#d0d0d0"></div>
<div class="r" style="left:55px;top:418px;width:21px;height:21px;background:#d0d0d0"></div>
<div class="r" style="left:76px;top:418px;width:21px;height:21px;background:#d0d0d0"></div>
<div class="r" style="left:103px;top:418px;width:21px;height:21px;background:#d0d0d0"></div>
<div class="r" style="left:124px;top:418px;width:21px;height:21px;background:#d0d0d0"></div>
<div class="r" style="left:145px;top:418px;width:7px;height:21px;background:#d0d0d0"></div>
<div class="r" style="left:152px;top:418px;width:369px;height:21px;background:#d0d0d0"></div>
<div class="r" style="left:521px;top:418px;width:7px;height:21px;background:#d0d0d0"></div>
<div class="r" style="left:528px;top:418px;width:21px;height:21px;background:#d0d0d0"></div>
<div class="r" style="left:549px;top:418px;width:21px;height:21px;background:#d0d0d0"></div>
<svg style="left:34px;top:418px;" width="540" height="21" viewBox="34 418 540 21"><path d="M37.500 421.500v13M51.500 421.500v13" stroke="#000" stroke-width="2"/><path d="M39 428l5.500-6v4h1v-4l5.500 6-5.500 6v-4h-1v4z" fill="#000"/><path d="M58 422l7 5 7-5v4h1.500v4h-1.500v4l-7-5-7 5v-4h-1.500v-4h1.500z" fill="#000"/><path d="M79 428l6.500-6v4h2v-4l6.500 6-6.500 6v-4h-2v4z" fill="#000"/><rect x="85.500" y="427" width="2" height="2" fill="#fff"/><path d="M107.500 421v14" stroke="#000" stroke-width="2"/><path d="M109 428l7-6.500v4h5.500v5h-5.500v4z" fill="#000"/><path d="M129 428l7-6.500v4h5.500v5h-5.500v4z" fill="#000"/><path d="M545 428l-7-6.500v4h-5.500v5h5.500v4z" fill="#000"/><path d="M564 428l-7-6.500v4h-5.500v5h5.500v4z" fill="#000"/><path d="M566.500 421v14" stroke="#000" stroke-width="2"/></svg>
<div class="g" style="left:579px;top:130px;width:71px;height:278px"></div>
<div style="left:604px;top:129px;width:22px;height:5px;background:#d0d0d0;"></div>
<svg style="left:604px;top:124px;" width="22" height="10" viewBox="604 124 22 10"><path d="M607 133h16l-8-8z" fill="#000"/></svg>
<div class="r" style="left:585px;top:137px;width:30px;height:30px;background:#d0d0d0"></div>
<div class="r" style="left:615px;top:137px;width:30px;height:30px;background:#d0d0d0"></div>
<div class="r" style="left:585px;top:167px;width:30px;height:30px;background:#d0d0d0"></div>
<div class="r" style="left:615px;top:167px;width:30px;height:30px;background:#d0d0d0"></div>
<div class="r" style="left:585px;top:197px;width:30px;height:30px;background:#d0d0d0"></div>
<div class="r" style="left:615px;top:197px;width:30px;height:30px;background:#d0d0d0"></div>
<div class="r" style="left:585px;top:227px;width:30px;height:30px;background:#d0d0d0"></div>
<div class="r" style="left:615px;top:227px;width:30px;height:30px;background:#d0d0d0"></div>
<div class="r" style="left:585px;top:257px;width:30px;height:30px;background:#d0d0d0"></div>
<div class="r" style="left:615px;top:257px;width:30px;height:30px;background:#d0d0d0"></div>
<div class="r" style="left:585px;top:287px;width:30px;height:30px;background:#d0d0d0"></div>
<div class="r" style="left:615px;top:287px;width:30px;height:30px;background:#d0d0d0"></div>
<div class="r" style="left:585px;top:317px;width:30px;height:30px;background:#d0d0d0"></div>
<div class="r" style="left:615px;top:317px;width:30px;height:30px;background:#d0d0d0"></div>
<div class="r" style="left:585px;top:347px;width:30px;height:30px;background:#d0d0d0"></div>
<div class="r" style="left:615px;top:347px;width:30px;height:30px;background:#d0d0d0"></div>
<div class="r" style="left:585px;top:377px;width:30px;height:27px;background:#d0d0d0"></div>
<div class="r" style="left:615px;top:377px;width:30px;height:27px;background:#d0d0d0"></div>
<svg style="left:585px;top:137px;" width="60" height="267" viewBox="585 137 60 267"><path d="M600 141l10 10.500h-5.500v9h-9v-9h-5.500z" fill="#efe8f8" stroke="#3a2a8a" stroke-width="1.7" stroke-linejoin="miter"/><path d="M630 161.5l10-10.500h-5.500v-9h-9v9h-5.500z" fill="#efe8f8" stroke="#3a2a8a" stroke-width="1.7"/><circle cx="596.5" cy="177.5" r="6.500" fill="#e4e4e4" stroke="#000" stroke-width="1.8"/><path d="M601.5 182.5l8.500 8.500" stroke="#1a1a3a" stroke-width="3.2"/><path d="M602 182.2l8 8" stroke="#6a6aa0" stroke-width="1"/><circle cx="627" cy="177" r="6.500" fill="#e4e4e4" stroke="#000" stroke-width="1.8"/><path d="M627 177v-5.500a5.500 5.500 0 0 0 -5.500 5.500z" fill="#3a2a8a"/><path d="M624 174h4v4h-4z" fill="#3a2a8a"/><path d="M634 173c5-2.500 8 3 4.500 7.500" fill="none" stroke="#4a4a8a" stroke-width="1.2"/><path d="M632 182l8.500 8.500" stroke="#1a1a3a" stroke-width="3.2"/><path d="M632.5 181.7l8 8" stroke="#6a6aa0" stroke-width="1"/><circle cx="600" cy="211.5" r="9.500" fill="none" stroke="#000" stroke-width="1.6"/><path d="M600 205.5l6 6-6 6-6-6z" fill="#e8e8e8" stroke="#000" stroke-width="1.5"/><path d="M600 207.5v8M596 211.5h8" stroke="#000" stroke-width="1.3"/><path d="M600 200.0v3.500M600 219.5v3.500M588.5 211.5h3.500M608 211.5h3.500" stroke="#000" stroke-width="2"/><path d="M620.5 202v8h21" fill="none" stroke="#333" stroke-width="1"/><path d="M620.5 213v9h21" fill="none" stroke="#333" stroke-width="1"/><path d="M621 209l4.500-5.500 2 2 2.500-2 3.500 4 3-2.500 2 3 2-1" fill="none" stroke="#c01840" stroke-width="1.2"/><path d="M621 214l3 5 2.500-2 2 3.500 4-5.500 2 2.500 3.500-3.500 2 2" fill="none" stroke="#1a1a3a" stroke-width="1.3"/><path d="M599.5 232v18M590.5 241h18" stroke="#14143c" stroke-width="3"/><path d="M599.5 233v16M591.5 241h16" stroke="#8a8ab0" stroke-width="0.8"/><rect x="602.5" y="244.5" width="9" height="9" fill="#e0e0e0" stroke="#000" stroke-dasharray="2 1.500"/><rect x="620" y="230" width="18" height="14" fill="#fff"/><rect x="621.5" y="230" width="1.800" height="14" fill="#c8c0e0"/><rect x="625.1" y="230" width="1.800" height="14" fill="#c8c0e0"/><rect x="628.7" y="230" width="1.800" height="14" fill="#c8c0e0"/><rect x="632.3" y="230" width="1.800" height="14" fill="#c8c0e0"/><rect x="635.9" y="230" width="1.800" height="14" fill="#c8c0e0"/><path d="M620.5 231v13h10" fill="none" stroke="#555" stroke-width="0.8"/><path d="M620 236l2 2.500 2-3 2 3.500 2-4.500 2 4 2-3.500 2 3 3-4.500 1.500 1.500" fill="none" stroke="#000" stroke-width="1.4"/><rect x="630.5" y="241.5" width="10" height="10.500" fill="#8c9440" stroke="#20240a" stroke-width="1.2"/><rect x="633" y="242" width="5" height="3.500" fill="#dcdcc0"/><rect x="632.5" y="247.5" width="6" height="4" fill="#20240a"/><rect x="636" y="248.5" width="1.500" height="2.500" fill="#ddd"/><circle cx="600" cy="271.5" r="11" fill="none" stroke="#d01838" stroke-width="2"/><path d="M592.2 263.7l15.600 15.600M607.8 263.7l-15.600 15.600" stroke="#d01838" stroke-width="1.5"/><path d="M600 262.5v18M591 271.5h18" stroke="#14143c" stroke-width="2.6"/><path d="M600 261.5v20" stroke="#d01838" stroke-width="0.8"/><path d="M604 283.5h8v-8" fill="none" stroke="#000" stroke-dasharray="1.500 1.500"/><rect x="620" y="260" width="18" height="14" fill="#fff"/><rect x="621.5" y="260" width="1.800" height="14" fill="#c8c0e0"/><rect x="625.1" y="260" width="1.800" height="14" fill="#c8c0e0"/><rect x="628.7" y="260" width="1.800" height="14" fill="#c8c0e0"/><rect x="632.3" y="260" width="1.800" height="14" fill="#c8c0e0"/><rect x="635.9" y="260" width="1.800" height="14" fill="#c8c0e0"/><path d="M620.5 261v13h10" fill="none" stroke="#555" stroke-width="0.8"/><path d="M620 266l2 2.500 2-3 2 3.500 2-4.500 2 4 2-3.500 2 3 3-4.500 1.500 1.500" fill="none" stroke="#000" stroke-width="1.4"/><path d="M629 280.5l12-11.500M630 269l11 12" stroke="#3a2a8a" stroke-width="2.2"/><path d="M590 291l14 14M588 302h15" stroke="#000" stroke-width="2"/><path d="M604 301c1-4 7-4 6 0s-5 3-6 2z" fill="#e8e8f8" stroke="#4a3aaa" stroke-width="1.6"/><path d="M602 305c-1 2 0 6 2 7s4-1 3-3-3-3-5-4z" fill="#e8e8f8" stroke="#4a3aaa" stroke-width="1.6"/><rect x="620" y="290" width="18" height="14" fill="#fff"/><rect x="621.5" y="290" width="1.800" height="14" fill="#f0a8b0"/><rect x="625.1" y="290" width="1.800" height="14" fill="#f0a8b0"/><rect x="628.7" y="290" width="1.800" height="14" fill="#f0a8b0"/><rect x="632.3" y="290" width="1.800" height="14" fill="#f0a8b0"/><rect x="635.9" y="290" width="1.800" height="14" fill="#f0a8b0"/><path d="M620.5 291v13h10" fill="none" stroke="#555" stroke-width="0.8"/><path d="M620 296l2 2.500 2-3 2 3.500 2-4.500 2 4 2-3.500 2 3 3-4.500 1.500 1.500" fill="none" stroke="#000" stroke-width="1.4"/><rect x="630.5" y="301.5" width="10" height="10.500" fill="#8c9440" stroke="#20240a" stroke-width="1.2"/><rect x="633" y="302" width="5" height="3.500" fill="#dcdcc0"/><rect x="632.5" y="307.5" width="6" height="4" fill="#20240a"/><rect x="636" y="308.5" width="1.500" height="2.500" fill="#ddd"/><path d="M590 321l14 14M588 332h15" stroke="#000" stroke-width="2"/><path d="M604 331c1-4 7-4 6 0s-5 3-6 2z" fill="#e8e8f8" stroke="#4a3aaa" stroke-width="1.6"/><path d="M602 335c-1 2 0 6 2 7s4-1 3-3-3-3-5-4z" fill="#e8e8f8" stroke="#4a3aaa" stroke-width="1.6"/><circle cx="600" cy="331.5" r="11" fill="none" stroke="#d01838" stroke-width="2"/><path d="M592.2 323.7l15.600 15.600M607.8 323.7l-15.600 15.600" stroke="#d01838" stroke-width="1.5"/><rect x="620" y="320" width="18" height="14" fill="#fff"/><rect x="621.5" y="320" width="1.800" height="14" fill="#f0a8b0"/><rect x="625.1" y="320" width="1.800" height="14" fill="#f0a8b0"/><rect x="628.7" y="320" width="1.800" height="14" fill="#f0a8b0"/><rect x="632.3" y="320" width="1.800" height="14" fill="#f0a8b0"/><rect x="635.9" y="320" width="1.800" height="14" fill="#f0a8b0"/><path d="M620.5 321v13h10" fill="none" stroke="#555" stroke-width="0.8"/><path d="M620 326l2 2.500 2-3 2 3.500 2-4.500 2 4 2-3.500 2 3 3-4.500 1.500 1.500" fill="none" stroke="#000" stroke-width="1.4"/><path d="M629 340.5l12-11.500M630 329l11 12" stroke="#3a2a8a" stroke-width="2.2"/><rect x="599" y="352" width="11" height="7" fill="#e8e8e8" stroke="#333" stroke-width="0.8"/><rect x="607" y="352" width="3.500" height="7" fill="#3a2a8a"/><rect x="589.5" y="356.5" width="15" height="14" fill="#fff" stroke="#000" stroke-width="1.4"/><path d="M592 362.5h3M596 362.5h6M592 365h3M596 365h6M592 367.5h3M596 367.5h6" stroke="#000" stroke-width="1.2"/><path d="M594 358l3-4 3 4 3-4" fill="none" stroke="#000" stroke-width="1"/><circle cx="598" cy="355" r="1.500" fill="none" stroke="#000" stroke-width="0.8"/><path d="M625 358l3-6h11l-2.500 6z" fill="#fff" stroke="#000" stroke-width="1.3"/><path d="M629 356l2-2 1.500 1.500 2-2" fill="none" stroke="#c01840" stroke-width="1"/><path d="M619.5 361l4-3h16l-2.500 3zM619.5 361v6l2 2.500h15l3-3v-8" fill="#e8e8e8" stroke="#000" stroke-width="1.4"/><path d="M620 364.5h16.500l3-3" fill="none" stroke="#000" stroke-width="1.6"/><path d="M621 367h15" stroke="#000" stroke-width="2"/><path d="M627 362.5h5" stroke="#777" stroke-width="1"/><path d="M592.5 381.5h6l3 3v9h-9z" fill="#fff" stroke="#000" stroke-width="1.2"/><path d="M594 386h4M594 388.5h6M594 391h6" stroke="#1a1a4a" stroke-width="1"/><path d="M598.5 385.5h6l3 3v9h-9z" fill="#fff" stroke="#000" stroke-width="1.2"/><path d="M600 390h4M600 392.5h6M600 395h6" stroke="#1a1a4a" stroke-width="1"/><path d="M620.5 383v15h17" fill="none" stroke="#000" stroke-width="1.4"/><path d="M621 395l3-3 2.500 2 3-4 3 2 2.500 3 2-1" fill="none" stroke="#c01840" stroke-width="1.1"/><rect x="631.5" y="378.5" width="9" height="9" fill="#fff" stroke="#000" stroke-width="1.2"/><path d="M633 381l3 2 3-2.500M633 385h6" stroke="#000" stroke-width="0.9" fill="none"/><path d="M624 394c-1-7 3-11 8-11" fill="none" stroke="#3a2a8a" stroke-width="2.2"/><path d="M621.5 391l3 5 3-5z" fill="#3a2a8a"/></svg>
<div style="left:604px;top:406px;width:22px;height:5px;background:#d0d0d0;"></div>
<svg style="left:604px;top:406px;" width="22" height="10" viewBox="604 406 22 10"><path d="M607 407h16l-8 8z" fill="#000"/></svg>
<div class="r" style="left:579px;top:418px;width:35px;height:21px;background:#d0d0d0"></div>
<div class="r" style="left:614px;top:418px;width:36px;height:21px;background:#d0d0d0"></div>
<svg style="left:579px;top:418px;" width="71" height="21" viewBox="579 418 71 21"><path d="M591 424h9l-4.500 4zM591 429h9l-4.500 4z" fill="#000"/><path d="M632 424v9l-4-4.500zM638 424v9l-4-4.500z" fill="#000"/></svg>
<div class="g" style="left:662px;top:130px;width:144px;height:307px"></div>
<div style="left:722px;top:129px;width:22px;height:5px;background:#d0d0d0;"></div>
<svg style="left:722px;top:124px;" width="22" height="10" viewBox="722 124 22 10"><path d="M725 133h16l-8-8z" fill="#000"/></svg>
<div style="left:669px;top:139px;font-size:12.2px;line-height:14px;transform:scaleX(0.87);transform-origin:0 50%;color:#000;"><span class="u">File</span></div>
<div style="left:669px;top:151px;font-size:12.2px;line-height:14px;transform:scaleX(0.87);transform-origin:0 50%;color:#000;">---</div>
<div style="left:669px;top:167px;font-size:12.2px;line-height:14px;transform:scaleX(0.87);transform-origin:0 50%;color:#000;"><span class="u">Channel</span></div>
<div style="left:669px;top:179px;font-size:12.2px;line-height:14px;transform:scaleX(0.87);transform-origin:0 50%;color:#000;">---</div>
<div style="left:669px;top:208px;width:129px;height:203px;background:#000;"></div>
<div style="left:670px;top:209px;width:127px;height:201px;background:#d0d0d0;"></div>
<div class="h" style="left:782px;top:209px;width:15px;height:201px"></div>
<svg style="left:669px;top:208px;font-family:inherit" width="129" height="203" viewBox="669 208 129 203"><rect x="685.5" y="208.5" width="12" height="12" fill="#d0d0d0" stroke="#000"/><text x="691.5" y="218" font-size="10" text-anchor="middle">1</text><rect x="697.5" y="208.5" width="12" height="12" fill="#d0d0d0" stroke="#000"/><text x="703.5" y="218" font-size="10" text-anchor="middle">2</text><rect x="709.5" y="208.5" width="12" height="12" fill="#d0d0d0" stroke="#000"/><text x="715.5" y="218" font-size="10" text-anchor="middle">3</text><rect x="721.5" y="208.5" width="12" height="12" fill="#d0d0d0" stroke="#000"/><text x="727.5" y="218" font-size="10" text-anchor="middle">4</text><rect x="733.5" y="208.5" width="12" height="12" fill="#d0d0d0" stroke="#000"/><text x="739.5" y="218" font-size="10" text-anchor="middle">5</text><rect x="745.5" y="208.5" width="12" height="12" fill="#d0d0d0" stroke="#000"/><text x="751.5" y="218" font-size="10" text-anchor="middle">6</text><rect x="757.5" y="208.5" width="12" height="12" fill="#d0d0d0" stroke="#000"/><text x="763.5" y="218" font-size="10" text-anchor="middle">7</text><rect x="769.5" y="208.5" width="12" height="12" fill="#d0d0d0" stroke="#000"/><text x="775.5" y="218" font-size="10" text-anchor="middle">8</text><rect x="669.5" y="208.5" width="16" height="12" fill="#d0d0d0" stroke="#000"/><rect x="686" y="220.5" width="11.5" height="11.9" fill="#fff"/><rect x="669.5" y="220.5" width="16" height="11.9" fill="#d0d0d0" stroke="#000"/><text x="674.5" y="230.4" font-size="10" text-anchor="middle">1</text><rect x="686" y="232.4" width="11.5" height="11.9" fill="#fff"/><rect x="669.5" y="232.4" width="16" height="11.9" fill="#d0d0d0" stroke="#000"/><text x="674.5" y="242.3" font-size="10" text-anchor="middle">2</text><rect x="686" y="244.3" width="11.5" height="11.9" fill="#fff"/><rect x="669.5" y="244.3" width="16" height="11.9" fill="#d0d0d0" stroke="#000"/><text x="674.5" y="254.2" font-size="10" text-anchor="middle">3</text><rect x="686" y="256.2" width="11.5" height="11.9" fill="#fff"/><rect x="669.5" y="256.2" width="16" height="11.9" fill="#d0d0d0" stroke="#000"/><text x="674.5" y="266.1" font-size="10" text-anchor="middle">4</text><rect x="686" y="268.1" width="11.5" height="11.9" fill="#fff"/><rect x="669.5" y="268.1" width="16" height="11.9" fill="#d0d0d0" stroke="#000"/><text x="674.5" y="278.0" font-size="10" text-anchor="middle">5</text><rect x="686" y="280.0" width="11.5" height="11.9" fill="#fff"/><rect x="669.5" y="280.0" width="16" height="11.9" fill="#d0d0d0" stroke="#000"/><text x="674.5" y="289.9" font-size="10" text-anchor="middle">6</text><rect x="686" y="291.9" width="11.5" height="11.9" fill="#2b3a9a"/><rect x="669.5" y="291.9" width="16" height="11.9" fill="#d0d0d0" stroke="#000"/><text x="674.5" y="301.8" font-size="10" text-anchor="middle">7</text><rect x="686" y="303.8" width="11.5" height="11.9" fill="#fff"/><rect x="669.5" y="303.8" width="16" height="11.9" fill="#d0d0d0" stroke="#000"/><text x="674.5" y="313.7" font-size="10" text-anchor="middle">8</text><rect x="669.5" y="315.7" width="16" height="11.9" fill="#d0d0d0" stroke="#000"/><text x="674.5" y="325.6" font-size="10" text-anchor="middle">9</text><rect x="669.5" y="327.6" width="16" height="11.9" fill="#d0d0d0" stroke="#000"/><text x="677.5" y="337.5" font-size="10" text-anchor="middle">10</text><rect x="669.5" y="339.5" width="16" height="11.9" fill="#d0d0d0" stroke="#000"/><text x="677.5" y="349.4" font-size="10" text-anchor="middle">11</text><rect x="669.5" y="351.4" width="16" height="11.9" fill="#d0d0d0" stroke="#000"/><text x="677.5" y="361.3" font-size="10" text-anchor="middle">12</text><rect x="669.5" y="363.3" width="16" height="11.9" fill="#d0d0d0" stroke="#000"/><text x="677.5" y="373.2" font-size="10" text-anchor="middle">13</text><rect x="669.5" y="375.2" width="16" height="11.9" fill="#d0d0d0" stroke="#000"/><text x="677.5" y="385.1" font-size="10" text-anchor="middle">14</text><rect x="669.5" y="387.1" width="16" height="11.9" fill="#d0d0d0" stroke="#000"/><text x="677.5" y="397.0" font-size="10" text-anchor="middle">15</text><rect x="669.5" y="399.0" width="16" height="11.9" fill="#d0d0d0" stroke="#000"/><text x="677.5" y="408.9" font-size="10" text-anchor="middle">16</text></svg>
<div class="r" style="left:782px;top:222px;width:15px;height:14px;background:#d0d0d0"></div>
<svg style="left:782px;top:222px;" width="15" height="14" viewBox="782 222 15 14"><path d="M786 231h7l-3.5-4z" fill="#000"/></svg>
<div class="r" style="left:782px;top:236px;width:15px;height:15px;background:#d0d0d0"></div>
<div class="r" style="left:669px;top:416px;width:23px;height:21px;background:#d0d0d0"></div>
<svg style="left:669px;top:416px;" width="50" height="21" viewBox="669 416 50 21"><rect x="673" y="419" width="4" height="4" fill="#2b3a9a"/><rect x="699" y="419" width="4" height="4" fill="#fff"/><rect x="673" y="424" width="4" height="4" fill="#2b3a9a"/><rect x="699" y="424" width="4" height="4" fill="#fff"/><rect x="673" y="429" width="4" height="4" fill="#2b3a9a"/><rect x="699" y="429" width="4" height="4" fill="#fff"/><rect x="678" y="419" width="4" height="4" fill="#2b3a9a"/><rect x="704" y="419" width="4" height="4" fill="#fff"/><rect x="678" y="424" width="4" height="4" fill="#2b3a9a"/><rect x="704" y="424" width="4" height="4" fill="#fff"/><rect x="678" y="429" width="4" height="4" fill="#2b3a9a"/><rect x="704" y="429" width="4" height="4" fill="#fff"/><rect x="683" y="419" width="4" height="4" fill="#2b3a9a"/><rect x="709" y="419" width="4" height="4" fill="#fff"/><rect x="683" y="424" width="4" height="4" fill="#2b3a9a"/><rect x="709" y="424" width="4" height="4" fill="#fff"/><rect x="683" y="429" width="4" height="4" fill="#2b3a9a"/><rect x="709" y="429" width="4" height="4" fill="#fff"/></svg>
<div style="left:692px;top:416px;width:1px;height:21px;background:#404040;"></div>
<div class="g" style="left:17px;top:470px;width:207px;height:137px"></div>
<div style="left:24px;top:469px;width:78px;height:3px;background:#d0d0d0;"></div>
<div style="left:26px;top:464px;font-size:12.2px;line-height:14px;transform:scaleX(0.87);transform-origin:0 50%;color:#b01030;">Edit Information</div>
<div style="left:25px;top:480px;font-size:12.2px;line-height:14px;transform:scaleX(0.87);transform-origin:0 50%;color:#000;">Edited Time History</div>
<div style="left:25px;top:496px;width:193px;height:21px;background:#fff;border:1px solid #000;box-shadow:-1px -1px 0 #808080,1px 1px 0 #fff"></div>
<div style="left:28px;top:498px;font-size:12.2px;line-height:14px;transform:scaleX(0.87);transform-origin:0 50%;color:#000;">Track_data_raw</div>
<div class="r2" style="left:25px;top:528px;width:113px;height:21px;background:#d0d0d0"></div>
<div style="left:28px;width:108px;text-align:center;top:532px;font-size:12.2px;line-height:14px;transform:scaleX(0.87);transform-origin:50% 50%;color:#000;">Configure Actions</div>
<div class="g" style="left:235px;top:470px;width:127px;height:137px"></div>
<div style="left:242px;top:469px;width:77px;height:3px;background:#d0d0d0;"></div>
<div style="left:244px;top:464px;font-size:12.2px;line-height:14px;transform:scaleX(0.87);transform-origin:0 50%;color:#3a3a9a;">Edit Operations</div>
<div class="r2" style="left:242px;top:488px;width:96px;height:20px;background:#d0d0d0"></div>
<div class="r2" style="left:338px;top:488px;width:18px;height:20px;background:#d0d0d0"></div>
<div style="left:252px;width:76px;text-align:center;top:491px;font-size:12.2px;line-height:14px;transform:scaleX(0.87);transform-origin:50% 50%;color:#000;">Find Spikes</div>
<svg style="left:340px;top:491px;" width="14" height="14" viewBox="340 491 14 14"><path d="M341.5 503.5l7.500-7.500" stroke="#2a1a10" stroke-width="2.2"/><path d="M341.3 502.8l7-7" stroke="#b09870" stroke-width="0.7"/><path d="M345 493.5l4-1.500 3.500 3.500v4.500l-2-2.500-2.500-2.500z" fill="#444" stroke="#111" stroke-width="0.9"/></svg>
<div class="r2" style="left:242px;top:512px;width:96px;height:20px;background:#d0d0d0"></div>
<div class="r2" style="left:338px;top:512px;width:18px;height:20px;background:#d0d0d0"></div>
<div style="left:237px;width:106px;text-align:center;top:515px;font-size:12.2px;line-height:14px;transform:scaleX(0.87);transform-origin:50% 50%;color:#000;">15% Abs MaxMin</div>
<svg style="left:340px;top:515px;" width="14" height="14" viewBox="340 515 14 14"><path d="M341.5 527.5l7.500-7.500" stroke="#2a1a10" stroke-width="2.2"/><path d="M341.3 526.8l7-7" stroke="#b09870" stroke-width="0.7"/><path d="M345 517.5l4-1.500 3.500 3.500v4.500l-2-2.500-2.500-2.500z" fill="#444" stroke="#111" stroke-width="0.9"/></svg>
<div class="r2" style="left:242px;top:536px;width:96px;height:20px;background:#d0d0d0"></div>
<div class="r2" style="left:338px;top:536px;width:18px;height:20px;background:#d0d0d0"></div>
<div style="left:261px;width:58px;text-align:center;top:539px;font-size:12.2px;line-height:14px;transform:scaleX(0.87);transform-origin:50% 50%;color:#000;">Cut data</div>
<svg style="left:340px;top:539px;" width="14" height="14" viewBox="340 539 14 14"><path d="M341.5 551.5l7.500-7.500" stroke="#2a1a10" stroke-width="2.2"/><path d="M341.3 550.8l7-7" stroke="#b09870" stroke-width="0.7"/><path d="M345 541.5l4-1.500 3.500 3.500v4.500l-2-2.500-2.500-2.500z" fill="#444" stroke="#111" stroke-width="0.9"/></svg>
<div class="r2" style="left:242px;top:560px;width:96px;height:20px;background:#d0d0d0"></div>
<div class="r2" style="left:338px;top:560px;width:18px;height:20px;background:#d0d0d0"></div>
<div style="left:256px;width:68px;text-align:center;top:563px;font-size:12.2px;line-height:14px;transform:scaleX(0.87);transform-origin:50% 50%;color:#000;">Filter Data</div>
<svg style="left:340px;top:563px;" width="14" height="14" viewBox="340 563 14 14"><path d="M341.5 575.5l7.500-7.500" stroke="#2a1a10" stroke-width="2.2"/><path d="M341.3 574.8l7-7" stroke="#b09870" stroke-width="0.7"/><path d="M345 565.5l4-1.500 3.500 3.500v4.500l-2-2.500-2.500-2.500z" fill="#444" stroke="#111" stroke-width="0.9"/></svg>
<div class="r2" style="left:242px;top:584px;width:96px;height:20px;background:#d0d0d0"></div>
<div class="r2" style="left:338px;top:584px;width:18px;height:20px;background:#d0d0d0"></div>
<div style="left:269px;width:44px;text-align:center;top:588px;font-size:12.2px;line-height:14px;transform:scaleX(0.87);transform-origin:50% 50%;color:#fff;">Edit 5</div>
<div style="left:268px;width:44px;text-align:center;top:587px;font-size:12.2px;line-height:14px;transform:scaleX(0.87);transform-origin:50% 50%;color:#8a8a8a;">Edit 5</div>
<div class="g" style="left:372px;top:470px;width:127px;height:137px"></div>
<div style="left:379px;top:469px;width:92px;height:3px;background:#d0d0d0;"></div>
<div style="left:381px;top:464px;font-size:12.2px;line-height:14px;transform:scaleX(0.87);transform-origin:0 50%;color:#3a3a9a;">Region Operations</div>
<div class="r2" style="left:379px;top:488px;width:96px;height:20px;background:#d0d0d0"></div>
<div class="r2" style="left:475px;top:488px;width:18px;height:20px;background:#d0d0d0"></div>
<div style="left:380px;width:94px;text-align:center;top:491px;font-size:12.2px;line-height:14px;transform:scaleX(0.87);transform-origin:50% 50%;color:#000;">Region Interset</div>
<svg style="left:477px;top:491px;" width="14" height="14" viewBox="477 491 14 14"><path d="M478.5 503.5l7.500-7.500" stroke="#2a1a10" stroke-width="2.2"/><path d="M478.3 502.8l7-7" stroke="#b09870" stroke-width="0.7"/><path d="M482 493.5l4-1.500 3.500 3.500v4.500l-2-2.500-2.500-2.500z" fill="#444" stroke="#111" stroke-width="0.9"/></svg>
<div class="r2" style="left:379px;top:512px;width:96px;height:20px;background:#d0d0d0"></div>
<div class="r2" style="left:475px;top:512px;width:18px;height:20px;background:#d0d0d0"></div>
<div style="left:384px;width:86px;text-align:center;top:515px;font-size:12.2px;line-height:14px;transform:scaleX(0.87);transform-origin:50% 50%;color:#000;">Region Union</div>
<svg style="left:477px;top:515px;" width="14" height="14" viewBox="477 515 14 14"><path d="M478.5 527.5l7.500-7.500" stroke="#2a1a10" stroke-width="2.2"/><path d="M478.3 526.8l7-7" stroke="#b09870" stroke-width="0.7"/><path d="M482 517.5l4-1.500 3.500 3.500v4.500l-2-2.500-2.500-2.500z" fill="#444" stroke="#111" stroke-width="0.9"/></svg>
<div class="r2" style="left:379px;top:536px;width:96px;height:20px;background:#d0d0d0"></div>
<div class="r2" style="left:475px;top:536px;width:18px;height:20px;background:#d0d0d0"></div>
<div style="left:398px;width:60px;text-align:center;top:540px;font-size:12.2px;line-height:14px;transform:scaleX(0.87);transform-origin:50% 50%;color:#fff;">Region 3</div>
<div style="left:397px;width:60px;text-align:center;top:539px;font-size:12.2px;line-height:14px;transform:scaleX(0.87);transform-origin:50% 50%;color:#8a8a8a;">Region 3</div>
<div class="r2" style="left:379px;top:560px;width:96px;height:20px;background:#d0d0d0"></div>
<div class="r2" style="left:475px;top:560px;width:18px;height:20px;background:#d0d0d0"></div>
<div style="left:398px;width:60px;text-align:center;top:564px;font-size:12.2px;line-height:14px;transform:scaleX(0.87);transform-origin:50% 50%;color:#fff;">Region 4</div>
<div style="left:397px;width:60px;text-align:center;top:563px;font-size:12.2px;line-height:14px;transform:scaleX(0.87);transform-origin:50% 50%;color:#8a8a8a;">Region 4</div>
<div class="r2" style="left:379px;top:584px;width:96px;height:20px;background:#d0d0d0"></div>
<div class="r2" style="left:475px;top:584px;width:18px;height:20px;background:#d0d0d0"></div>
<div style="left:398px;width:60px;text-align:center;top:588px;font-size:12.2px;line-height:14px;transform:scaleX(0.87);transform-origin:50% 50%;color:#fff;">Region 5</div>
<div style="left:397px;width:60px;text-align:center;top:587px;font-size:12.2px;line-height:14px;transform:scaleX(0.87);transform-origin:50% 50%;color:#8a8a8a;">Region 5</div>
<div class="g" style="left:509px;top:470px;width:127px;height:137px"></div>
<div style="left:516px;top:469px;width:103px;height:3px;background:#d0d0d0;"></div>
<div style="left:518px;top:464px;font-size:12.2px;line-height:14px;transform:scaleX(0.87);transform-origin:0 50%;color:#3a3a9a;">User Defined Actions</div>
<div class="r2" style="left:516px;top:488px;width:96px;height:20px;background:#d0d0d0"></div>
<div class="r2" style="left:612px;top:488px;width:18px;height:20px;background:#d0d0d0"></div>
<div style="left:532px;width:64px;text-align:center;top:491px;font-size:12.2px;line-height:14px;transform:scaleX(0.87);transform-origin:50% 50%;color:#000;">Raw ASD</div>
<svg style="left:614px;top:491px;" width="14" height="14" viewBox="614 491 14 14"><path d="M615.5 503.5l7.500-7.500" stroke="#2a1a10" stroke-width="2.2"/><path d="M615.3 502.8l7-7" stroke="#b09870" stroke-width="0.7"/><path d="M619 493.5l4-1.500 3.500 3.500v4.500l-2-2.500-2.500-2.500z" fill="#444" stroke="#111" stroke-width="0.9"/></svg>
<div class="r2" style="left:516px;top:512px;width:96px;height:20px;background:#d0d0d0"></div>
<div class="r2" style="left:612px;top:512px;width:18px;height:20px;background:#d0d0d0"></div>
<div style="left:527px;width:74px;text-align:center;top:515px;font-size:12.2px;line-height:14px;transform:scaleX(0.87);transform-origin:50% 50%;color:#000;">Edited ASD</div>
<svg style="left:614px;top:515px;" width="14" height="14" viewBox="614 515 14 14"><path d="M615.5 527.5l7.500-7.500" stroke="#2a1a10" stroke-width="2.2"/><path d="M615.3 526.8l7-7" stroke="#b09870" stroke-width="0.7"/><path d="M619 517.5l4-1.500 3.500 3.500v4.500l-2-2.500-2.500-2.500z" fill="#444" stroke="#111" stroke-width="0.9"/></svg>
<div class="r2" style="left:516px;top:536px;width:96px;height:20px;background:#d0d0d0"></div>
<div class="r2" style="left:612px;top:536px;width:18px;height:20px;background:#d0d0d0"></div>
<div style="left:524px;width:80px;text-align:center;top:539px;font-size:12.2px;line-height:14px;transform:scaleX(0.87);transform-origin:50% 50%;color:#000;">Filtered ASD</div>
<svg style="left:614px;top:539px;" width="14" height="14" viewBox="614 539 14 14"><path d="M615.5 551.5l7.500-7.500" stroke="#2a1a10" stroke-width="2.2"/><path d="M615.3 550.8l7-7" stroke="#b09870" stroke-width="0.7"/><path d="M619 541.5l4-1.500 3.500 3.500v4.500l-2-2.500-2.500-2.500z" fill="#444" stroke="#111" stroke-width="0.9"/></svg>
<div class="r2" style="left:516px;top:560px;width:96px;height:20px;background:#d0d0d0"></div>
<div class="r2" style="left:612px;top:560px;width:18px;height:20px;background:#d0d0d0"></div>
<div style="left:541px;width:48px;text-align:center;top:564px;font-size:12.2px;line-height:14px;transform:scaleX(0.87);transform-origin:50% 50%;color:#fff;">User 4</div>
<div style="left:540px;width:48px;text-align:center;top:563px;font-size:12.2px;line-height:14px;transform:scaleX(0.87);transform-origin:50% 50%;color:#8a8a8a;">User 4</div>
<div class="r2" style="left:516px;top:584px;width:96px;height:20px;background:#d0d0d0"></div>
<div class="r2" style="left:612px;top:584px;width:18px;height:20px;background:#d0d0d0"></div>
<div style="left:541px;width:48px;text-align:center;top:588px;font-size:12.2px;line-height:14px;transform:scaleX(0.87);transform-origin:50% 50%;color:#fff;">User 5</div>
<div style="left:540px;width:48px;text-align:center;top:587px;font-size:12.2px;line-height:14px;transform:scaleX(0.87);transform-origin:50% 50%;color:#8a8a8a;">User 5</div>
<div style="left:715px;top:320px;width:545px;height:287px;background:#d0d0d0;border:1px solid;border-color:#e0e0e0 #1a1a1a #1a1a1a #e0e0e0;box-shadow:inset 1px 1px 0 #fff,inset -1px -1px 0 #808080"></div>
<div style="left:719px;top:324px;width:537px;height:18px;background:#3a1f7a;"></div>
<div style="left:739px;top:327px;font-size:12px;line-height:14px;color:#fff;font-weight:bold;">Signal Level Indicator 1</div>
<div class="r2" style="left:1204px;top:326px;width:15px;height:13px;background:#d0d0d0"></div>
<div style="left:1208px;top:335px;width:6px;height:2px;background:#000;"></div>
<div class="r2" style="left:1220px;top:326px;width:15px;height:13px;background:#d0d0d0"></div>
<div style="left:1223px;top:328px;width:9px;height:8px;border:1px solid #000;border-top-width:2px"></div>
<div class="r2" style="left:1238px;top:326px;width:15px;height:13px;background:#d0d0d0"></div>
<svg style="left:1241px;top:328px;" width="9" height="9" viewBox="1241 328 9 9"><path d="M1242 329l7 7M1249 329l-7 7" stroke="#000" stroke-width="1.6" fill="none"/></svg>
<svg style="left:720px;top:325px;" width="18" height="17" viewBox="720 325 18 17"><rect x="722.500" y="327.500" width="13" height="13" fill="#b8d0d8" stroke="#888"/><path d="M726.500 328v13M731.500 328v13M723 331.500h13M723 336.500h13" stroke="#6a8a90" stroke-dasharray="1 1"/></svg>
<div style="left:719px;top:342px;width:476px;height:260px;background:#fff;"></div>
<div style="left:721px;top:344px;font-size:12.2px;line-height:14px;transform:scaleX(0.87);transform-origin:0 50%;color:#000;">Signal Fault</div>
<div style="left:721px;top:357px;font-size:12.2px;line-height:14px;transform:scaleX(0.87);transform-origin:0 50%;color:#000;">Indicator</div>
<svg style="left:719px;top:342px;" width="476" height="260" viewBox="719 342 476 260"><circle cx="803.5" cy="359.5" r="9" fill="#e01020" stroke="#70101a" stroke-width="1"/><path d="M798 363.5a7 7 0 0 0 11 0" stroke="#a00818" fill="none" stroke-width="1.5"/><circle cx="854.5" cy="359.5" r="9" fill="#e01020" stroke="#70101a" stroke-width="1"/><path d="M849 363.5a7 7 0 0 0 11 0" stroke="#a00818" fill="none" stroke-width="1.5"/><circle cx="905.5" cy="359.5" r="9" fill="#e01020" stroke="#70101a" stroke-width="1"/><path d="M900 363.5a7 7 0 0 0 11 0" stroke="#a00818" fill="none" stroke-width="1.5"/><circle cx="956.5" cy="359.5" r="9" fill="#e01020" stroke="#70101a" stroke-width="1"/><path d="M951 363.5a7 7 0 0 0 11 0" stroke="#a00818" fill="none" stroke-width="1.5"/><circle cx="1006.5" cy="359.5" r="9" fill="#e01020" stroke="#70101a" stroke-width="1"/><path d="M1001 363.5a7 7 0 0 0 11 0" stroke="#a00818" fill="none" stroke-width="1.5"/><circle cx="1057.5" cy="359.5" r="9" fill="#e01020" stroke="#70101a" stroke-width="1"/><path d="M1052 363.5a7 7 0 0 0 11 0" stroke="#a00818" fill="none" stroke-width="1.5"/><circle cx="1108.5" cy="359.5" r="9" fill="#e01020" stroke="#70101a" stroke-width="1"/><path d="M1103 363.5a7 7 0 0 0 11 0" stroke="#a00818" fill="none" stroke-width="1.5"/><circle cx="1159.5" cy="359.5" r="9" fill="#e01020" stroke="#70101a" stroke-width="1"/><path d="M1154 363.5a7 7 0 0 0 11 0" stroke="#a00818" fill="none" stroke-width="1.5"/><defs><pattern id="dots" x="803" y="385" width="5.644" height="7.84" patternUnits="userSpaceOnUse"><rect x="0" y="0" width="1" height="1" fill="#222"/></pattern></defs><rect x="779" y="386" width="406" height="155" fill="url(#dots)"/><path d="M803.5 386V541" stroke="#222" stroke-dasharray="1 3"/><rect x="798.5" y="384.6" width="10" height="149.0" fill="#22b14c"/><path d="M854.5 386V541" stroke="#222" stroke-dasharray="1 3"/><rect x="849.5" y="387.7" width="10" height="147.4" fill="#22b14c"/><path d="M905.5 386V541" stroke="#222" stroke-dasharray="1 3"/><rect x="900.5" y="405.8" width="10" height="112.1" fill="#22b14c"/><path d="M956.5 386V541" stroke="#222" stroke-dasharray="1 3"/><rect x="951.5" y="390.1" width="10" height="144.3" fill="#22b14c"/><path d="M1006.5 386V541" stroke="#222" stroke-dasharray="1 3"/><rect x="1001.5" y="387.7" width="10" height="146.6" fill="#22b14c"/><path d="M1057.5 386V541" stroke="#222" stroke-dasharray="1 3"/><rect x="1052.5" y="390.1" width="10" height="147.4" fill="#22b14c"/><path d="M1108.5 386V541" stroke="#222" stroke-dasharray="1 3"/><rect x="1103.5" y="394.8" width="10" height="144.3" fill="#22b14c"/><path d="M1159.5 386V541" stroke="#222" stroke-dasharray="1 3"/><rect x="1154.5" y="396.4" width="10" height="141.1" fill="#22b14c"/><rect x="778.5" y="385.500" width="407" height="156" fill="none" stroke="#000"/><path d="M778 463.5H1185" stroke="#000"/><path d="M774 541.5H779" stroke="#000"/><path d="M776 534.5H779" stroke="#000"/><path d="M774 526.5H779" stroke="#000"/><path d="M776 518.5H779" stroke="#000"/><path d="M774 510.5H779" stroke="#000"/><path d="M776 502.5H779" stroke="#000"/><path d="M774 494.5H779" stroke="#000"/><path d="M776 487.5H779" stroke="#000"/><path d="M774 479.5H779" stroke="#000"/><path d="M776 471.5H779" stroke="#000"/><path d="M774 463.5H779" stroke="#000"/><path d="M776 455.5H779" stroke="#000"/><path d="M774 447.5H779" stroke="#000"/><path d="M776 439.5H779" stroke="#000"/><path d="M774 432.5H779" stroke="#000"/><path d="M776 424.5H779" stroke="#000"/><path d="M774 416.5H779" stroke="#000"/><path d="M776 408.5H779" stroke="#000"/><path d="M774 400.5H779" stroke="#000"/><path d="M776 392.5H779" stroke="#000"/><path d="M774 385.5H779" stroke="#000"/><rect x="910" y="581" width="10" height="11" fill="#22b14c"/></svg>
<div style="left:574px;width:200px;text-align:right;top:534px;font-size:12.2px;line-height:14px;transform:scaleX(0.87);transform-origin:100% 50%;color:#000;">-100</div>
<div style="left:574px;width:200px;text-align:right;top:519px;font-size:12.2px;line-height:14px;transform:scaleX(0.87);transform-origin:100% 50%;color:#000;">-80</div>
<div style="left:574px;width:200px;text-align:right;top:503px;font-size:12.2px;line-height:14px;transform:scaleX(0.87);transform-origin:100% 50%;color:#000;">-60</div>
<div style="left:574px;width:200px;text-align:right;top:487px;font-size:12.2px;line-height:14px;transform:scaleX(0.87);transform-origin:100% 50%;color:#000;">-40</div>
<div style="left:574px;width:200px;text-align:right;top:472px;font-size:12.2px;line-height:14px;transform:scaleX(0.87);transform-origin:100% 50%;color:#000;">-20</div>
<div style="left:574px;width:200px;text-align:right;top:456px;font-size:12.2px;line-height:14px;transform:scaleX(0.87);transform-origin:100% 50%;color:#000;">0</div>
<div style="left:574px;width:200px;text-align:right;top:440px;font-size:12.2px;line-height:14px;transform:scaleX(0.87);transform-origin:100% 50%;color:#000;">20</div>
<div style="left:574px;width:200px;text-align:right;top:425px;font-size:12.2px;line-height:14px;transform:scaleX(0.87);transform-origin:100% 50%;color:#000;">40</div>
<div style="left:574px;width:200px;text-align:right;top:409px;font-size:12.2px;line-height:14px;transform:scaleX(0.87);transform-origin:100% 50%;color:#000;">60</div>
<div style="left:574px;width:200px;text-align:right;top:393px;font-size:12.2px;line-height:14px;transform:scaleX(0.87);transform-origin:100% 50%;color:#000;">80</div>
<div style="left:574px;width:200px;text-align:right;top:378px;font-size:12.2px;line-height:14px;transform:scaleX(0.87);transform-origin:100% 50%;color:#000;">100</div>
<div style="left:794px;width:18px;text-align:center;top:549px;font-size:12.2px;line-height:14px;transform:scaleX(0.87);transform-origin:50% 50%;color:#000;">1</div>
<div style="left:845px;width:18px;text-align:center;top:549px;font-size:12.2px;line-height:14px;transform:scaleX(0.87);transform-origin:50% 50%;color:#000;">2</div>
<div style="left:896px;width:18px;text-align:center;top:549px;font-size:12.2px;line-height:14px;transform:scaleX(0.87);transform-origin:50% 50%;color:#000;">3</div>
<div style="left:947px;width:18px;text-align:center;top:549px;font-size:12.2px;line-height:14px;transform:scaleX(0.87);transform-origin:50% 50%;color:#000;">4</div>
<div style="left:997px;width:18px;text-align:center;top:549px;font-size:12.2px;line-height:14px;transform:scaleX(0.87);transform-origin:50% 50%;color:#000;">5</div>
<div style="left:1048px;width:18px;text-align:center;top:549px;font-size:12.2px;line-height:14px;transform:scaleX(0.87);transform-origin:50% 50%;color:#000;">6</div>
<div style="left:1099px;width:18px;text-align:center;top:549px;font-size:12.2px;line-height:14px;transform:scaleX(0.87);transform-origin:50% 50%;color:#000;">7</div>
<div style="left:1150px;width:18px;text-align:center;top:549px;font-size:12.2px;line-height:14px;transform:scaleX(0.87);transform-origin:50% 50%;color:#000;">8</div>
<div style="left:948px;top:579px;font-size:12.2px;line-height:14px;transform:scaleX(0.87);transform-origin:0 50%;color:#000;">Signal Range</div>
<div style="left:681px;top:455px;width:120px;text-align:center;font-size:12.2px;line-height:15px;transform:rotate(-90deg) scaleX(0.87)">Percent Full Scale</div>
<div class="r2" style="left:1199px;top:527px;width:57px;height:40px;background:#d0d0d0"></div>
<div style="left:1205px;width:44px;text-align:center;top:533px;font-size:12.2px;line-height:14px;transform:scaleX(0.87);transform-origin:50% 50%;color:#000;">Reset</div>
<div style="left:1197px;width:60px;text-align:center;top:546px;font-size:12.2px;line-height:14px;transform:scaleX(0.87);transform-origin:50% 50%;color:#000;">Statistics</div>
<div style="left:1199px;top:570px;width:57px;height:34px;border:1px solid #000"></div>
<div class="r2" style="left:1200px;top:571px;width:55px;height:32px;background:#d0d0d0"></div>
<div style="left:1204px;top:575px;width:47px;height:24px;border:1px dotted #000"></div>
<div style="left:1193px;width:68px;text-align:center;top:580px;font-size:12.2px;line-height:14px;transform:scaleX(0.87);transform-origin:50% 50%;color:#000;">Properties</div>
<div style="left:1262px;top:73px;width:18px;height:897px;background:#d0d0d0;"></div>
<div class="h" style="left:1262px;top:73px;width:16px;height:882px"></div>
<div class="r" style="left:1262px;top:73px;width:16px;height:17px;background:#d0d0d0"></div>
<svg style="left:1262px;top:73px;" width="16" height="17" viewBox="1262 73 16 17"><path d="M1266 84h8l-4-5z" fill="#000"/></svg>
<div class="r" style="left:1262px;top:90px;width:16px;height:826px;background:#d0d0d0"></div>
<div class="r" style="left:1262px;top:939px;width:16px;height:16px;background:#d0d0d0"></div>
<svg style="left:1262px;top:939px;" width="16" height="16" viewBox="1262 939 16 16"><path d="M1266 945h8l-4 5z" fill="#000"/></svg>
<div class="h" style="left:0;top:955px;width:1262px;height:15px"></div>
<div class="r" style="left:3px;top:955px;width:15px;height:15px;background:#d0d0d0"></div>
<svg style="left:3px;top:955px;" width="15" height="15" viewBox="3 955 15 15"><path d="M12 958v8l-5-4z" fill="#000"/></svg>
<div class="r" style="left:27px;top:955px;width:1201px;height:15px;background:#d0d0d0"></div>
<div class="r" style="left:1245px;top:955px;width:16px;height:15px;background:#d0d0d0"></div>
<svg style="left:1245px;top:955px;" width="16" height="15" viewBox="1245 955 16 15"><path d="M1251 958v8l5-4z" fill="#000"/></svg>
<div style="left:1261px;top:955px;width:19px;height:15px;background:#d0d0d0;"></div>
<div style="left:0px;top:970px;width:1280px;height:3px;background:#1a1a1a;"></div>
<div style="left:0px;top:973px;width:1280px;height:27px;background:#d0d0d0;"></div>
<div style="left:0px;top:973px;width:1280px;height:1px;background:#fff;"></div>
<div class="s" style="left:2px;top:975px;width:360px;height:19px"></div>
<div class="s" style="left:366px;top:978px;width:224px;height:14px"></div>
<div class="s" style="left:593px;top:975px;width:65px;height:19px"></div>
<div class="s" style="left:660px;top:977px;width:68px;height:17px"></div>
<div class="s" style="left:730px;top:977px;width:63px;height:17px"></div>
<div style="left:665px;top:979px;font-size:12.2px;line-height:14px;transform:scaleX(0.87);transform-origin:0 50%;color:#000;">EMULATOR</div>
<div style="left:735px;top:979px;font-size:12.2px;line-height:14px;transform:scaleX(0.87);transform-origin:0 50%;color:#000;">STATION 1</div>
<div style="left:0px;top:996px;width:1280px;height:1px;background:#f0f0f0;"></div>
</body></html>
